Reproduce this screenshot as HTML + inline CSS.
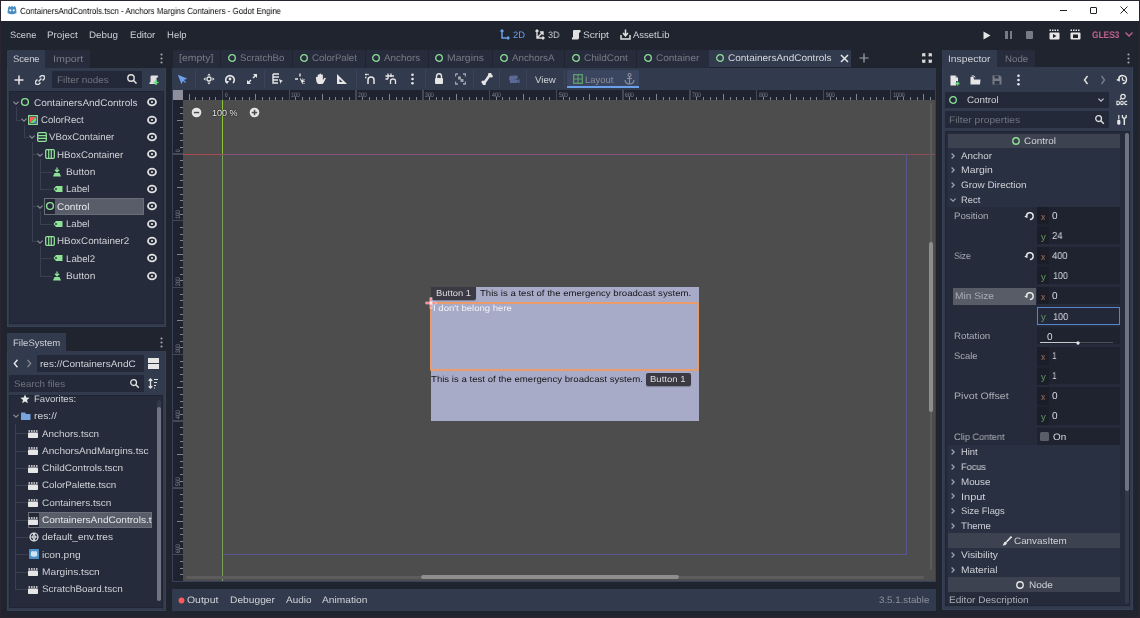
<!DOCTYPE html><html><head><meta charset="utf-8"><style>
html,body{margin:0;padding:0;width:1140px;height:618px;overflow:hidden;background:#20242f;}
.a{position:absolute;}
.t{position:absolute;white-space:nowrap;line-height:12px;font-family:"Liberation Sans", sans-serif;text-rendering:geometricPrecision;will-change:transform;}
</style></head><body>
<div class="a" style="left:0px;top:0px;width:1140px;height:618px;background:#2a2530;"></div>
<div class="a" style="left:1px;top:1px;width:1138px;height:616px;background:#20242f;"></div>
<div class="a" style="left:1px;top:1px;width:1138px;height:20px;background:#ffffff;"></div>
<svg class="a" style="left:6px;top:4px;" width="12" height="12" viewBox="0 0 12 12"><path d="M2 4 L3 2 L5 3 L6 1.5 L7 3 L9 2 L10 4 L10.5 9 Q6 11.5 1.5 9 Z" fill="#478cbf"/><circle cx="4.3" cy="6.3" r="1.1" fill="#fff"/><circle cx="7.7" cy="6.3" r="1.1" fill="#fff"/></svg>
<div class="t" style="left:20.30px;top:1px;color:#000;font-size:8.9px;line-height:20px;transform:scaleX(0.8940);transform-origin:0 0;">ContainersAndControls.tscn - Anchors Margins Containers - Godot Engine</div>
<div class="a" style="left:1060px;top:10px;width:7px;height:1px;background:#222;"></div>
<div class="a" style="left:1090px;top:6.5px;width:5px;height:5px;border:1px solid #222;border-radius:1px"></div>
<svg class="a" style="left:1120px;top:6px;" width="8" height="8" viewBox="0 0 8 8"><path d="M0.5 0.5 L7.5 7.5 M7.5 0.5 L0.5 7.5" stroke="#222" stroke-width="1"/></svg>
<div class="t" style="left:10.00px;top:25px;color:#cfd1d6;font-size:9.3px;line-height:20px;transform:scaleX(0.9975);transform-origin:0 0;">Scene</div>
<div class="t" style="left:47.40px;top:25px;color:#cfd1d6;font-size:9.3px;line-height:20px;transform:scaleX(1.0580);transform-origin:0 0;">Project</div>
<div class="t" style="left:89.20px;top:25px;color:#cfd1d6;font-size:9.3px;line-height:20px;transform:scaleX(1.0552);transform-origin:0 0;">Debug</div>
<div class="t" style="left:130.00px;top:25px;color:#cfd1d6;font-size:9.3px;line-height:20px;transform:scaleX(1.0423);transform-origin:0 0;">Editor</div>
<div class="t" style="left:167.40px;top:25px;color:#cfd1d6;font-size:9.3px;line-height:20px;transform:scaleX(1.0256);transform-origin:0 0;">Help</div>
<svg class="a" style="left:500px;top:29px;" width="10" height="11" viewBox="0 0 10 11"><path d="M2 1 L2 9 L9 9 M0.5 2.5 L2 1 L3.5 2.5 M7.5 7.5 L9 9 L7.5 10.5" stroke="#6a9fe9" stroke-width="1.5" fill="none"/></svg>
<div class="t" style="left:512.50px;top:25px;color:#6a9fe9;font-size:9.4px;line-height:20px;transform:scaleX(0.9724);transform-origin:0 0;">2D</div>
<svg class="a" style="left:535px;top:29px;" width="10" height="11" viewBox="0 0 10 11"><path d="M2 1 L2 9 L9 9 M2 9 L8 3 M0.5 2.5 L2 1 L3.5 2.5 M7.5 7.5 L9 9 L7.5 10.5 M5 3 L8 3 L8 6" stroke="#e0e0e0" stroke-width="1.4" fill="none"/></svg>
<div class="t" style="left:547.50px;top:25px;color:#cfd1d6;font-size:9.4px;line-height:20px;transform:scaleX(0.9558);transform-origin:0 0;">3D</div>
<svg class="a" style="left:571px;top:29px;" width="10" height="11" viewBox="0 0 10 11"><path d="M3 1 H9 Q10 1 9.5 3 L8 4 V9 Q8 10.5 6 10.5 H1 Q0.5 8 2 8 V2 Q2 1 3 1Z" fill="#e0e0e0"/></svg>
<div class="t" style="left:583.00px;top:25px;color:#cfd1d6;font-size:9.4px;line-height:20px;transform:scaleX(1.0826);transform-origin:0 0;">Script</div>
<svg class="a" style="left:620px;top:29px;" width="11" height="11" viewBox="0 0 11 11"><path d="M5.5 0.5 V6.5 M3 4 L5.5 6.8 L8 4 M1 6 V10 H10 V6" stroke="#e0e0e0" stroke-width="1.5" fill="none"/></svg>
<div class="t" style="left:632.50px;top:25px;color:#cfd1d6;font-size:9.4px;line-height:20px;transform:scaleX(1.0125);transform-origin:0 0;">AssetLib</div>
<svg class="a" style="left:983px;top:31px;" width="8" height="9" viewBox="0 0 8 9"><path d="M0.5 0.5 L7.5 4.5 L0.5 8.5Z" fill="#e6e6e6"/></svg>
<div class="a" style="left:1005px;top:31px;width:2.6px;height:8px;background:#767b86;"></div>
<div class="a" style="left:1009.5px;top:31px;width:2.6px;height:8px;background:#767b86;"></div>
<div class="a" style="left:1026px;top:31px;width:7px;height:8px;background:#767b86;border-radius:1px"></div>
<svg class="a" style="left:1049px;top:29px;" width="11" height="11" viewBox="0 0 11 11"><rect x="0.5" y="3.5" width="10" height="7" rx="1" fill="#e6e6e6"/><path d="M0.5 1.2 L10.5 1.2" stroke="#e6e6e6" stroke-width="1.4" stroke-dasharray="1.5 1"/><path d="M4 5 L7.5 7 L4 9Z" fill="#1d212b"/></svg>
<svg class="a" style="left:1070px;top:29px;" width="11" height="11" viewBox="0 0 11 11"><rect x="0.5" y="3.5" width="10" height="7" rx="1" fill="#e6e6e6"/><path d="M0.5 1.2 L10.5 1.2" stroke="#e6e6e6" stroke-width="1.4" stroke-dasharray="1.5 1"/><rect x="3" y="5.5" width="5" height="3.5" fill="#1d212b"/></svg>
<div class="t" style="left:1091.50px;top:26px;color:#c3638e;font-size:9.6px;line-height:20px;transform:scaleX(0.8733);transform-origin:0 0;font-weight:bold;">GLES3</div>
<svg class="a" style="left:1125px;top:32px;" width="8" height="5" viewBox="0 0 8 5"><path d="M0.5 0.5 L4 4 L7.5 0.5" stroke="#c3638e" stroke-width="1.3" fill="none"/></svg>
<div class="a" style="left:7px;top:49.5px;width:38px;height:18.5px;background:#323a4d;"></div>
<div class="t" style="left:12.60px;top:49px;color:#cfd1d6;font-size:9.4px;line-height:20px;transform:scaleX(0.9869);transform-origin:0 0;">Scene</div>
<div class="a" style="left:45px;top:49.5px;width:45px;height:18.5px;background:#262c3b;"></div>
<div class="t" style="left:52.60px;top:49px;color:#777b85;font-size:9.4px;line-height:20px;transform:scaleX(1.1408);transform-origin:0 0;">Import</div>
<svg class="a" style="left:159.5px;top:53px;" width="3" height="11" viewBox="0 0 3 11"><circle cx="1.5" cy="1.5" r="1.1" fill="#a0a4ad"/><circle cx="1.5" cy="5.5" r="1.1" fill="#a0a4ad"/><circle cx="1.5" cy="9.5" r="1.1" fill="#a0a4ad"/></svg>
<div class="a" style="left:7px;top:68px;width:159px;height:259px;background:#323a4d;box-sizing:border-box;border:1px solid #374259;border-top:none"></div>
<svg class="a" style="left:14px;top:75px;" width="10" height="10" viewBox="0 0 10 10"><path d="M5 0.5 V9.5 M0.5 5 H9.5" stroke="#e6e6e6" stroke-width="1.5"/></svg>
<svg class="a" style="left:35px;top:75px;" width="10" height="10" viewBox="0 0 10 10"><path d="M4.5 2.5 L6 1 Q7.5 -0.3 9 1 Q10.3 2.5 9 4 L7.5 5.5 M5.5 7.5 L4 9 Q2.5 10.3 1 9 Q-0.3 7.5 1 6 L2.5 4.5 M3.5 6.5 L6.5 3.5" stroke="#dadde2" stroke-width="1.5" fill="none"/></svg>
<div class="a" style="left:52px;top:71px;width:90px;height:17px;background:#232939;"></div>
<div class="t" style="left:56.50px;top:70px;color:#6f737d;font-size:9.4px;line-height:20px;transform:scaleX(1.0567);transform-origin:0 0;">Filter nodes</div>
<svg class="a" style="left:126px;top:73px;" width="12" height="12" viewBox="0 0 12 12"><circle cx="5" cy="5" r="3.2" stroke="#e0e0e0" stroke-width="1.4" fill="none"/><path d="M7.3 7.3 L10.5 10.5" stroke="#e0e0e0" stroke-width="1.6"/></svg>
<svg class="a" style="left:149px;top:75px;" width="10" height="10" viewBox="0 0 10 10"><path d="M3 0.5 H8.5 Q9.5 0.5 9 2 L7.5 3 V7.5 Q7.5 9 6 9 H0.5 Q0 7 1.5 7 V1.5 Q1.5 0.5 3 0.5Z" fill="#e0e0e0"/><path d="M7 5 V10 M4.5 7.5 H9.5" stroke="#5fe07a" stroke-width="1.6"/></svg>
<div class="a" style="left:9px;top:91px;width:154.5px;height:232.5px;background:#252b3b;box-sizing:border-box;border:1px solid #212533"></div>
<div class="a" style="left:15.5px;top:107.2px;width:1px;height:12.350000000000009px;background:#3a4050;"></div>
<div class="a" style="left:15.5px;top:119.55000000000001px;width:5.5px;height:1px;background:#3a4050;"></div>
<div class="a" style="left:23.5px;top:124.55000000000001px;width:1px;height:12.349999999999994px;background:#3a4050;"></div>
<div class="a" style="left:23.5px;top:136.9px;width:5.5px;height:1px;background:#3a4050;"></div>
<div class="a" style="left:31.5px;top:141.9px;width:1px;height:99.1px;background:#3a4050;"></div>
<div class="a" style="left:31.5px;top:154.25px;width:5.5px;height:1px;background:#3a4050;"></div>
<div class="a" style="left:31.5px;top:206.3px;width:5.5px;height:1px;background:#3a4050;"></div>
<div class="a" style="left:31.5px;top:241.0px;width:5.5px;height:1px;background:#3a4050;"></div>
<div class="a" style="left:39.5px;top:159.25px;width:1px;height:29.69999999999999px;background:#3a4050;"></div>
<div class="a" style="left:39.5px;top:171.60000000000002px;width:12.5px;height:1px;background:#3a4050;"></div>
<div class="a" style="left:39.5px;top:188.95px;width:12.5px;height:1px;background:#3a4050;"></div>
<div class="a" style="left:39.5px;top:211.3px;width:1px;height:12.350000000000023px;background:#3a4050;"></div>
<div class="a" style="left:39.5px;top:223.65000000000003px;width:12.5px;height:1px;background:#3a4050;"></div>
<div class="a" style="left:39.5px;top:246.0px;width:1px;height:29.69999999999999px;background:#3a4050;"></div>
<div class="a" style="left:39.5px;top:258.35px;width:12.5px;height:1px;background:#3a4050;"></div>
<div class="a" style="left:39.5px;top:275.7px;width:12.5px;height:1px;background:#3a4050;"></div>
<div class="a" style="left:44px;top:198px;width:100px;height:16.8px;background:#595d69;box-sizing:border-box;border:1px solid #6a6e79"></div>
<div class="a" style="left:45px;top:199px;width:10px;height:14.8px;background:#242836;"></div>
<svg class="a" style="left:12px;top:99.7px;" width="8" height="6" viewBox="0 0 8 6"><path d="M1.4 1.6 L4 4.2 L6.6 1.6" stroke="#8a8e98" stroke-width="1.15" fill="none"/></svg>
<svg class="a" style="left:20.3px;top:97.2px;" width="10" height="10" viewBox="0 0 10 10"><circle cx="5" cy="5" r="3.4" stroke="#8fe196" stroke-width="1.4" fill="none"/></svg>
<div class="t" style="left:33.70px;top:94px;color:#cfd1d6;font-size:9.6px;line-height:20px;transform:scaleX(1.0427);transform-origin:0 0;">ContainersAndControls</div>
<svg class="a" style="left:146.2px;top:97.2px;" width="12" height="10" viewBox="0 0 12 10"><ellipse cx="6" cy="5" rx="4.0" ry="3.3" stroke="#e2e2e2" stroke-width="1.8" fill="none"/><circle cx="6" cy="5" r="1.1" fill="#e2e2e2"/></svg>
<svg class="a" style="left:20.2px;top:117.05000000000001px;" width="8" height="6" viewBox="0 0 8 6"><path d="M1.4 1.6 L4 4.2 L6.6 1.6" stroke="#8a8e98" stroke-width="1.15" fill="none"/></svg>
<svg class="a" style="left:28.4px;top:114.55000000000001px;" width="10" height="10" viewBox="0 0 10 10"><rect x="0.7" y="0.7" width="8.6" height="8.6" stroke="#8fe196" stroke-width="1.3" fill="none"/><path d="M2 2 H8 L2 8Z" fill="#ff5d5d"/><path d="M8 2 V8 H2Z" fill="#57e86a"/><path d="M8 5 V8 H5Z" fill="#4f8fff"/></svg>
<div class="t" style="left:41.40px;top:111px;color:#cfd1d6;font-size:9.6px;line-height:20px;transform:scaleX(1.0030);transform-origin:0 0;">ColorRect</div>
<svg class="a" style="left:146.2px;top:114.55000000000001px;" width="12" height="10" viewBox="0 0 12 10"><ellipse cx="6" cy="5" rx="4.0" ry="3.3" stroke="#e2e2e2" stroke-width="1.8" fill="none"/><circle cx="6" cy="5" r="1.1" fill="#e2e2e2"/></svg>
<svg class="a" style="left:28.1px;top:134.4px;" width="8" height="6" viewBox="0 0 8 6"><path d="M1.4 1.6 L4 4.2 L6.6 1.6" stroke="#8a8e98" stroke-width="1.15" fill="none"/></svg>
<svg class="a" style="left:36.5px;top:131.9px;" width="10" height="10" viewBox="0 0 10 10"><rect x="0.7" y="0.7" width="8.6" height="8.6" rx="1" stroke="#8fe196" stroke-width="1.3" fill="none"/><path d="M1 3.7 H9 M1 6.3 H9" stroke="#8fe196" stroke-width="1.2"/></svg>
<div class="t" style="left:49.40px;top:128px;color:#cfd1d6;font-size:9.6px;line-height:20px;transform:scaleX(1.0115);transform-origin:0 0;">VBoxContainer</div>
<svg class="a" style="left:146.2px;top:131.9px;" width="12" height="10" viewBox="0 0 12 10"><ellipse cx="6" cy="5" rx="4.0" ry="3.3" stroke="#e2e2e2" stroke-width="1.8" fill="none"/><circle cx="6" cy="5" r="1.1" fill="#e2e2e2"/></svg>
<svg class="a" style="left:36px;top:151.75px;" width="8" height="6" viewBox="0 0 8 6"><path d="M1.4 1.6 L4 4.2 L6.6 1.6" stroke="#8a8e98" stroke-width="1.15" fill="none"/></svg>
<svg class="a" style="left:44.5px;top:149.25px;" width="10" height="10" viewBox="0 0 10 10"><rect x="0.7" y="0.7" width="8.6" height="8.6" rx="1" stroke="#8fe196" stroke-width="1.3" fill="none"/><path d="M3.7 1 V9 M6.3 1 V9" stroke="#8fe196" stroke-width="1.2"/></svg>
<div class="t" style="left:57.40px;top:146px;color:#cfd1d6;font-size:9.6px;line-height:20px;transform:scaleX(1.0186);transform-origin:0 0;">HBoxContainer</div>
<svg class="a" style="left:146.2px;top:149.25px;" width="12" height="10" viewBox="0 0 12 10"><ellipse cx="6" cy="5" rx="4.0" ry="3.3" stroke="#e2e2e2" stroke-width="1.8" fill="none"/><circle cx="6" cy="5" r="1.1" fill="#e2e2e2"/></svg>
<svg class="a" style="left:52.4px;top:166.60000000000002px;" width="10" height="10" viewBox="0 0 10 10"><path d="M5 0.5 V4.5 M3 2.8 L5 4.8 L7 2.8" stroke="#8fe196" stroke-width="1.3" fill="none"/><path d="M2.5 6 H7.5 L9 9.5 H1Z" fill="#8fe196"/></svg>
<div class="t" style="left:65.50px;top:163px;color:#cfd1d6;font-size:9.6px;line-height:20px;transform:scaleX(1.0597);transform-origin:0 0;">Button</div>
<svg class="a" style="left:146.2px;top:166.60000000000002px;" width="12" height="10" viewBox="0 0 12 10"><ellipse cx="6" cy="5" rx="4.0" ry="3.3" stroke="#e2e2e2" stroke-width="1.8" fill="none"/><circle cx="6" cy="5" r="1.1" fill="#e2e2e2"/></svg>
<svg class="a" style="left:52.6px;top:183.95px;" width="10" height="10" viewBox="0 0 10 10"><path d="M0.5 5 L3 2 H9.5 V8 H3Z" fill="#8fe196"/><circle cx="3" cy="5" r="0.9" fill="#242836"/></svg>
<div class="t" style="left:65.50px;top:180px;color:#cfd1d6;font-size:9.6px;line-height:20px;transform:scaleX(0.9927);transform-origin:0 0;">Label</div>
<svg class="a" style="left:146.2px;top:183.95px;" width="12" height="10" viewBox="0 0 12 10"><ellipse cx="6" cy="5" rx="4.0" ry="3.3" stroke="#e2e2e2" stroke-width="1.8" fill="none"/><circle cx="6" cy="5" r="1.1" fill="#e2e2e2"/></svg>
<svg class="a" style="left:36px;top:203.8px;" width="8" height="6" viewBox="0 0 8 6"><path d="M1.4 1.6 L4 4.2 L6.6 1.6" stroke="#8a8e98" stroke-width="1.15" fill="none"/></svg>
<svg class="a" style="left:44.5px;top:201.3px;" width="10" height="10" viewBox="0 0 10 10"><circle cx="5" cy="5" r="3.4" stroke="#8fe196" stroke-width="1.4" fill="none"/></svg>
<div class="t" style="left:57.30px;top:198px;color:#e6e7ea;font-size:9.6px;line-height:20px;transform:scaleX(1.0465);transform-origin:0 0;">Control</div>
<svg class="a" style="left:146.2px;top:201.3px;" width="12" height="10" viewBox="0 0 12 10"><ellipse cx="6" cy="5" rx="4.0" ry="3.3" stroke="#e2e2e2" stroke-width="1.8" fill="none"/><circle cx="6" cy="5" r="1.1" fill="#e2e2e2"/></svg>
<svg class="a" style="left:52.6px;top:218.65000000000003px;" width="10" height="10" viewBox="0 0 10 10"><path d="M0.5 5 L3 2 H9.5 V8 H3Z" fill="#8fe196"/><circle cx="3" cy="5" r="0.9" fill="#242836"/></svg>
<div class="t" style="left:65.50px;top:215px;color:#cfd1d6;font-size:9.6px;line-height:20px;transform:scaleX(0.9927);transform-origin:0 0;">Label</div>
<svg class="a" style="left:146.2px;top:218.65000000000003px;" width="12" height="10" viewBox="0 0 12 10"><ellipse cx="6" cy="5" rx="4.0" ry="3.3" stroke="#e2e2e2" stroke-width="1.8" fill="none"/><circle cx="6" cy="5" r="1.1" fill="#e2e2e2"/></svg>
<svg class="a" style="left:36px;top:238.5px;" width="8" height="6" viewBox="0 0 8 6"><path d="M1.4 1.6 L4 4.2 L6.6 1.6" stroke="#8a8e98" stroke-width="1.15" fill="none"/></svg>
<svg class="a" style="left:44.5px;top:236.0px;" width="10" height="10" viewBox="0 0 10 10"><rect x="0.7" y="0.7" width="8.6" height="8.6" rx="1" stroke="#8fe196" stroke-width="1.3" fill="none"/><path d="M3.7 1 V9 M6.3 1 V9" stroke="#8fe196" stroke-width="1.2"/></svg>
<div class="t" style="left:57.30px;top:232px;color:#cfd1d6;font-size:9.6px;line-height:20px;transform:scaleX(1.0246);transform-origin:0 0;">HBoxContainer2</div>
<svg class="a" style="left:146.2px;top:236.0px;" width="12" height="10" viewBox="0 0 12 10"><ellipse cx="6" cy="5" rx="4.0" ry="3.3" stroke="#e2e2e2" stroke-width="1.8" fill="none"/><circle cx="6" cy="5" r="1.1" fill="#e2e2e2"/></svg>
<svg class="a" style="left:52.6px;top:253.35000000000002px;" width="10" height="10" viewBox="0 0 10 10"><path d="M0.5 5 L3 2 H9.5 V8 H3Z" fill="#8fe196"/><circle cx="3" cy="5" r="0.9" fill="#242836"/></svg>
<div class="t" style="left:65.50px;top:250px;color:#cfd1d6;font-size:9.6px;line-height:20px;transform:scaleX(1.0087);transform-origin:0 0;">Label2</div>
<svg class="a" style="left:146.2px;top:253.35000000000002px;" width="12" height="10" viewBox="0 0 12 10"><ellipse cx="6" cy="5" rx="4.0" ry="3.3" stroke="#e2e2e2" stroke-width="1.8" fill="none"/><circle cx="6" cy="5" r="1.1" fill="#e2e2e2"/></svg>
<svg class="a" style="left:52.4px;top:270.7px;" width="10" height="10" viewBox="0 0 10 10"><path d="M5 0.5 V4.5 M3 2.8 L5 4.8 L7 2.8" stroke="#8fe196" stroke-width="1.3" fill="none"/><path d="M2.5 6 H7.5 L9 9.5 H1Z" fill="#8fe196"/></svg>
<div class="t" style="left:65.50px;top:267px;color:#cfd1d6;font-size:9.6px;line-height:20px;transform:scaleX(1.0597);transform-origin:0 0;">Button</div>
<svg class="a" style="left:146.2px;top:270.7px;" width="12" height="10" viewBox="0 0 12 10"><ellipse cx="6" cy="5" rx="4.0" ry="3.3" stroke="#e2e2e2" stroke-width="1.8" fill="none"/><circle cx="6" cy="5" r="1.1" fill="#e2e2e2"/></svg>
<div class="a" style="left:7px;top:333.2px;width:58.8px;height:18.2px;background:#323a4d;"></div>
<div class="t" style="left:12.60px;top:333px;color:#cfd1d6;font-size:9.4px;line-height:20px;transform:scaleX(1.0197);transform-origin:0 0;">FileSystem</div>
<svg class="a" style="left:159.5px;top:337px;" width="3" height="11" viewBox="0 0 3 11"><circle cx="1.5" cy="1.5" r="1.1" fill="#a0a4ad"/><circle cx="1.5" cy="5.5" r="1.1" fill="#a0a4ad"/><circle cx="1.5" cy="9.5" r="1.1" fill="#a0a4ad"/></svg>
<div class="a" style="left:7px;top:351.4px;width:159px;height:260px;background:#323a4d;box-sizing:border-box;border:1px solid #374259;border-top:none"></div>
<svg class="a" style="left:13px;top:359px;" width="6" height="9" viewBox="0 0 6 9"><path d="M4.5 0.8 L1.3 4.5 L4.5 8.2" stroke="#e6e6e6" stroke-width="1.4" fill="none"/></svg>
<svg class="a" style="left:26px;top:359px;" width="6" height="9" viewBox="0 0 6 9"><path d="M1.5 0.8 L4.7 4.5 L1.5 8.2" stroke="#8a8e98" stroke-width="1.2" fill="none"/></svg>
<div class="a" style="left:36.5px;top:355.3px;width:107.4px;height:16.5px;background:#232939;"></div>
<div class="t" style="left:40.00px;top:354px;color:#cfd1d6;font-size:9.4px;line-height:20px;transform:scaleX(1.0683);transform-origin:0 0;">res://ContainersAndC</div>
<div class="a" style="left:148px;top:358.2px;width:11.3px;height:4.5px;background:#e6e6e6;"></div>
<div class="a" style="left:148px;top:364.4px;width:11.3px;height:4.5px;background:#e6e6e6;"></div>
<div class="a" style="left:9.3px;top:375px;width:134.6px;height:16.7px;background:#232939;"></div>
<div class="t" style="left:13.80px;top:374px;color:#6f737d;font-size:9.4px;line-height:20px;transform:scaleX(1.0425);transform-origin:0 0;">Search files</div>
<svg class="a" style="left:129px;top:378px;" width="11" height="11" viewBox="0 0 11 11"><circle cx="4.6" cy="4.6" r="2.9" stroke="#e0e0e0" stroke-width="1.3" fill="none"/><path d="M6.8 6.8 L9.8 9.8" stroke="#e0e0e0" stroke-width="1.5"/></svg>
<svg class="a" style="left:148px;top:378px;" width="11" height="11" viewBox="0 0 11 11"><path d="M2.5 1 V10 M0.7 2.8 L2.5 1 L4.3 2.8 M0.7 8.2 L2.5 10 L4.3 8.2" stroke="#e0e0e0" stroke-width="1.3" fill="none"/><path d="M6 1.5 H10 M6 4.5 H9 M6 7.5 H8 M6 10 H7" stroke="#e0e0e0" stroke-width="1.1"/></svg>
<div class="a" style="left:9.3px;top:394.8px;width:153.5px;height:213.5px;background:#252b3b;box-sizing:border-box;border:1px solid #212533"></div>
<div class="a" style="left:157px;top:400.2px;width:4px;height:200.6px;background:#333946;border-radius:2px"></div>
<div class="a" style="left:157px;top:407px;width:4px;height:193.8px;background:#6f7480;border-radius:2px"></div>
<svg class="a" style="left:20px;top:394px;" width="10" height="10" viewBox="0 0 10 10"><path d="M5 0.5 L6.3 3.6 L9.6 3.8 L7 6 L7.9 9.3 L5 7.5 L2.1 9.3 L3 6 L0.4 3.8 L3.7 3.6Z" fill="#e6e6e6"/></svg>
<div class="t" style="left:33.70px;top:389px;color:#cfd1d6;font-size:9.4px;line-height:20px;transform:scaleX(1.0226);transform-origin:0 0;">Favorites:</div>
<svg class="a" style="left:12px;top:413.4px;" width="8" height="6" viewBox="0 0 8 6"><path d="M1.4 1.6 L4 4.2 L6.6 1.6" stroke="#8a8e98" stroke-width="1.15" fill="none"/></svg>
<svg class="a" style="left:20.5px;top:411.5px;" width="10" height="8.5" viewBox="0 0 10 8.5"><path d="M0 0.5 H4 L5 2 H9.5 V8.5 H0Z" fill="#7aa4e0"/></svg>
<div class="t" style="left:33.70px;top:406px;color:#cfd1d6;font-size:9.4px;line-height:20px;transform:scaleX(1.0997);transform-origin:0 0;">res://</div>
<div class="a" style="left:15px;top:424px;width:1px;height:165.4px;background:#3a4050;"></div>
<div class="a" style="left:15px;top:433.2px;width:13px;height:1px;background:#3a4050;"></div>
<svg class="a" style="left:28.3px;top:428.9px;" width="10" height="9" viewBox="0 0 10 9"><path d="M0.5 2 H9.5" stroke="#e6e6e6" stroke-width="1.3" stroke-dasharray="1.6 0.9"/><rect x="0" y="3.5" width="10" height="5.5" rx="0.8" fill="#e6e6e6"/></svg>
<div class="t" style="left:41.80px;top:424px;color:#cfd1d6;font-size:9.4px;line-height:20px;transform:scaleX(1.0528);transform-origin:0 0;">Anchors.tscn</div>
<div class="a" style="left:15px;top:450.52px;width:13px;height:1px;background:#3a4050;"></div>
<svg class="a" style="left:28.3px;top:446.21999999999997px;" width="10" height="9" viewBox="0 0 10 9"><path d="M0.5 2 H9.5" stroke="#e6e6e6" stroke-width="1.3" stroke-dasharray="1.6 0.9"/><rect x="0" y="3.5" width="10" height="5.5" rx="0.8" fill="#e6e6e6"/></svg>
<div class="t" style="left:41.80px;top:441px;color:#cfd1d6;font-size:9.4px;line-height:20px;transform:scaleX(1.0759);transform-origin:0 0;">AnchorsAndMargins.tsc</div>
<div class="a" style="left:15px;top:467.84px;width:13px;height:1px;background:#3a4050;"></div>
<svg class="a" style="left:28.3px;top:463.53999999999996px;" width="10" height="9" viewBox="0 0 10 9"><path d="M0.5 2 H9.5" stroke="#e6e6e6" stroke-width="1.3" stroke-dasharray="1.6 0.9"/><rect x="0" y="3.5" width="10" height="5.5" rx="0.8" fill="#e6e6e6"/></svg>
<div class="t" style="left:41.80px;top:458px;color:#cfd1d6;font-size:9.4px;line-height:20px;transform:scaleX(1.0671);transform-origin:0 0;">ChildControls.tscn</div>
<div class="a" style="left:15px;top:485.15999999999997px;width:13px;height:1px;background:#3a4050;"></div>
<svg class="a" style="left:28.3px;top:480.85999999999996px;" width="10" height="9" viewBox="0 0 10 9"><path d="M0.5 2 H9.5" stroke="#e6e6e6" stroke-width="1.3" stroke-dasharray="1.6 0.9"/><rect x="0" y="3.5" width="10" height="5.5" rx="0.8" fill="#e6e6e6"/></svg>
<div class="t" style="left:41.80px;top:475px;color:#cfd1d6;font-size:9.4px;line-height:20px;transform:scaleX(1.0408);transform-origin:0 0;">ColorPalette.tscn</div>
<div class="a" style="left:15px;top:502.48px;width:13px;height:1px;background:#3a4050;"></div>
<svg class="a" style="left:28.3px;top:498.18px;" width="10" height="9" viewBox="0 0 10 9"><path d="M0.5 2 H9.5" stroke="#e6e6e6" stroke-width="1.3" stroke-dasharray="1.6 0.9"/><rect x="0" y="3.5" width="10" height="5.5" rx="0.8" fill="#e6e6e6"/></svg>
<div class="t" style="left:41.80px;top:493px;color:#cfd1d6;font-size:9.4px;line-height:20px;transform:scaleX(1.0623);transform-origin:0 0;">Containers.tscn</div>
<div class="a" style="left:15px;top:519.8px;width:13px;height:1px;background:#3a4050;"></div>
<div class="a" style="left:28.1px;top:511.6px;width:124.2px;height:16.9px;background:#595d69;box-sizing:border-box;border:1px solid #6a6e79"></div>
<div class="a" style="left:29.1px;top:512.6px;width:9.8px;height:14.9px;background:#242836;"></div>
<svg class="a" style="left:28.3px;top:515.5px;" width="10" height="9" viewBox="0 0 10 9"><path d="M0.5 2 H9.5" stroke="#e6e6e6" stroke-width="1.3" stroke-dasharray="1.6 0.9"/><rect x="0" y="3.5" width="10" height="5.5" rx="0.8" fill="#e6e6e6"/></svg>
<div class="t" style="left:41.80px;top:510px;color:#e6e7ea;font-size:9.4px;line-height:20px;transform:scaleX(1.0721);transform-origin:0 0;">ContainersAndControls.t</div>
<div class="a" style="left:15px;top:537.12px;width:13px;height:1px;background:#3a4050;"></div>
<svg class="a" style="left:28.5px;top:532.12px;" width="10" height="10" viewBox="0 0 10 10"><circle cx="5" cy="5" r="4" stroke="#e6e6e6" stroke-width="1.2" fill="none"/><path d="M1 5 H9 M5 1 V9 M5 1 Q2 5 5 9 M5 1 Q8 5 5 9" stroke="#e6e6e6" stroke-width="0.9" fill="none"/></svg>
<div class="t" style="left:41.80px;top:527px;color:#cfd1d6;font-size:9.4px;line-height:20px;transform:scaleX(1.0759);transform-origin:0 0;">default_env.tres</div>
<div class="a" style="left:15px;top:554.44px;width:13px;height:1px;background:#3a4050;"></div>
<svg class="a" style="left:28.5px;top:549.44px;" width="10" height="10" viewBox="0 0 10 10"><rect x="0" y="0" width="10" height="10" rx="1" fill="#4f8fc8"/><path d="M2 3 L3 2 L5 2.6 L7 2 L8 3 L8.3 6.8 Q5 8.5 1.7 6.8Z" fill="#cfe3f5"/></svg>
<div class="t" style="left:41.80px;top:545px;color:#cfd1d6;font-size:9.4px;line-height:20px;transform:scaleX(1.0892);transform-origin:0 0;">icon.png</div>
<div class="a" style="left:15px;top:571.76px;width:13px;height:1px;background:#3a4050;"></div>
<svg class="a" style="left:28.3px;top:567.46px;" width="10" height="9" viewBox="0 0 10 9"><path d="M0.5 2 H9.5" stroke="#e6e6e6" stroke-width="1.3" stroke-dasharray="1.6 0.9"/><rect x="0" y="3.5" width="10" height="5.5" rx="0.8" fill="#e6e6e6"/></svg>
<div class="t" style="left:41.80px;top:562px;color:#cfd1d6;font-size:9.4px;line-height:20px;transform:scaleX(1.0863);transform-origin:0 0;">Margins.tscn</div>
<div class="a" style="left:15px;top:589.0799999999999px;width:13px;height:1px;background:#3a4050;"></div>
<svg class="a" style="left:28.3px;top:584.78px;" width="10" height="9" viewBox="0 0 10 9"><path d="M0.5 2 H9.5" stroke="#e6e6e6" stroke-width="1.3" stroke-dasharray="1.6 0.9"/><rect x="0" y="3.5" width="10" height="5.5" rx="0.8" fill="#e6e6e6"/></svg>
<div class="t" style="left:41.80px;top:579px;color:#cfd1d6;font-size:9.4px;line-height:20px;transform:scaleX(1.0534);transform-origin:0 0;">ScratchBoard.tscn</div>
<div class="a" style="left:173px;top:49.5px;width:46.5px;height:18px;background:#262c3b;"></div>
<div class="t" style="left:178.60px;top:49px;color:#777b85;font-size:9.6px;line-height:20px;transform:scaleX(1.0925);transform-origin:0 0;">[empty]</div>
<div class="a" style="left:220.5px;top:49.5px;width:71.0px;height:18px;background:#262c3b;"></div>
<svg class="a" style="left:226.8px;top:53px;" width="10" height="10" viewBox="0 0 10 10"><circle cx="5" cy="5" r="3.3" stroke="#8fe196" stroke-width="1.3" fill="none"/></svg>
<div class="t" style="left:240.00px;top:49px;color:#777b85;font-size:9.6px;line-height:20px;transform:scaleX(1.0022);transform-origin:0 0;">ScratchBo</div>
<div class="a" style="left:292.5px;top:49.5px;width:72.0px;height:18px;background:#262c3b;"></div>
<svg class="a" style="left:298.6px;top:53px;" width="10" height="10" viewBox="0 0 10 10"><circle cx="5" cy="5" r="3.3" stroke="#8fe196" stroke-width="1.3" fill="none"/></svg>
<div class="t" style="left:311.80px;top:49px;color:#777b85;font-size:9.6px;line-height:20px;transform:scaleX(1.0015);transform-origin:0 0;">ColorPalet</div>
<div class="a" style="left:365.5px;top:49.5px;width:62.5px;height:18px;background:#262c3b;"></div>
<svg class="a" style="left:370.7px;top:53px;" width="10" height="10" viewBox="0 0 10 10"><circle cx="5" cy="5" r="3.3" stroke="#8fe196" stroke-width="1.3" fill="none"/></svg>
<div class="t" style="left:384.00px;top:49px;color:#777b85;font-size:9.6px;line-height:20px;transform:scaleX(1.0275);transform-origin:0 0;">Anchors</div>
<div class="a" style="left:429px;top:49.5px;width:62.5px;height:18px;background:#262c3b;"></div>
<svg class="a" style="left:434.3px;top:53px;" width="10" height="10" viewBox="0 0 10 10"><circle cx="5" cy="5" r="3.3" stroke="#8fe196" stroke-width="1.3" fill="none"/></svg>
<div class="t" style="left:447.20px;top:49px;color:#777b85;font-size:9.6px;line-height:20px;transform:scaleX(1.0812);transform-origin:0 0;">Margins</div>
<div class="a" style="left:492.5px;top:49.5px;width:71.0px;height:18px;background:#262c3b;"></div>
<svg class="a" style="left:498.6px;top:53px;" width="10" height="10" viewBox="0 0 10 10"><circle cx="5" cy="5" r="3.3" stroke="#8fe196" stroke-width="1.3" fill="none"/></svg>
<div class="t" style="left:511.60px;top:49px;color:#777b85;font-size:9.6px;line-height:20px;transform:scaleX(1.0201);transform-origin:0 0;">AnchorsA</div>
<div class="a" style="left:564.5px;top:49.5px;width:71.0px;height:18px;background:#262c3b;"></div>
<svg class="a" style="left:570.6px;top:53px;" width="10" height="10" viewBox="0 0 10 10"><circle cx="5" cy="5" r="3.3" stroke="#8fe196" stroke-width="1.3" fill="none"/></svg>
<div class="t" style="left:583.70px;top:49px;color:#777b85;font-size:9.6px;line-height:20px;transform:scaleX(1.0417);transform-origin:0 0;">ChildCont</div>
<div class="a" style="left:636.5px;top:49.5px;width:72.5px;height:18px;background:#262c3b;"></div>
<svg class="a" style="left:642.8px;top:53px;" width="10" height="10" viewBox="0 0 10 10"><circle cx="5" cy="5" r="3.3" stroke="#8fe196" stroke-width="1.3" fill="none"/></svg>
<div class="t" style="left:656.30px;top:49px;color:#777b85;font-size:9.6px;line-height:20px;transform:scaleX(1.0405);transform-origin:0 0;">Container</div>
<div class="a" style="left:709.2px;top:49.8px;width:142.1px;height:17.7px;background:#323a4d;"></div>
<svg class="a" style="left:714.7px;top:53px;" width="10" height="10" viewBox="0 0 10 10"><circle cx="5" cy="5" r="3.3" stroke="#8fe196" stroke-width="1.3" fill="none"/></svg>
<div class="t" style="left:728.00px;top:49px;color:#d6d8dc;font-size:9.6px;line-height:20px;transform:scaleX(1.0437);transform-origin:0 0;">ContainersAndControls</div>
<svg class="a" style="left:840px;top:53.5px;" width="9" height="9" viewBox="0 0 9 9"><path d="M1 1 L8 8 M8 1 L1 8" stroke="#e6e6e6" stroke-width="1.5"/></svg>
<svg class="a" style="left:858.5px;top:53px;" width="10" height="10" viewBox="0 0 10 10"><path d="M5 0.5 V9.5 M0.5 5 H9.5" stroke="#a0a4ad" stroke-width="1.2"/></svg>
<svg class="a" style="left:922px;top:53px;" width="10" height="10" viewBox="0 0 10 10"><path d="M0.8 3.5 V0.8 H3.5 M0.8 0.8 L3.3 3.3 M6.5 0.8 H9.2 V3.5 M9.2 0.8 L6.7 3.3 M0.8 6.5 V9.2 H3.5 M0.8 9.2 L3.3 6.7 M9.2 6.5 V9.2 H6.5 M9.2 9.2 L6.7 6.7" stroke="#e6e6e6" stroke-width="1.3" fill="none"/></svg>
<div class="a" style="left:172px;top:67.5px;width:764px;height:22.5px;background:#323a4d;"></div>
<div class="a" style="left:195.2px;top:70px;width:1px;height:18px;background:#3b445a;"></div>
<div class="a" style="left:264.2px;top:70px;width:1px;height:18px;background:#3b445a;"></div>
<div class="a" style="left:355.5px;top:70px;width:1px;height:18px;background:#3b445a;"></div>
<div class="a" style="left:425.0px;top:70px;width:1px;height:18px;background:#3b445a;"></div>
<div class="a" style="left:473.3px;top:70px;width:1px;height:18px;background:#3b445a;"></div>
<div class="a" style="left:498.9px;top:70px;width:1px;height:18px;background:#3b445a;"></div>
<div class="a" style="left:526.3px;top:70px;width:1px;height:18px;background:#3b445a;"></div>
<div class="a" style="left:563.5px;top:70px;width:1px;height:18px;background:#3b445a;"></div>
<svg class="a" style="left:178px;top:74.5px;" width="9" height="9" viewBox="0 0 9 9"><path d="M0.8 0.8 L7.8 3.6 L4.8 4.8 L3.6 7.8Z M4.5 4.5 L7.5 7.5" fill="#6ea1ec" stroke="#6ea1ec" stroke-width="1.1"/></svg>
<svg class="a" style="left:203px;top:73px;" width="12" height="12" viewBox="0 0 12 12"><circle cx="6" cy="6" r="2" fill="none" stroke="#e6e6e6" stroke-width="1.3"/><path d="M6 0.5 L4.3 2.5 H7.7Z M6 11.5 L4.3 9.5 H7.7Z M0.5 6 L2.5 4.3 V7.7Z M11.5 6 L9.5 4.3 V7.7Z" fill="#e6e6e6"/></svg>
<svg class="a" style="left:224px;top:73px;" width="12" height="12" viewBox="0 0 12 12"><path d="M3 10 A4.3 4.3 0 1 1 9 10" stroke="#e6e6e6" stroke-width="1.6" fill="none"/><circle cx="6" cy="6" r="1.4" fill="#e6e6e6"/><path d="M1 8 L3.2 11 L5 8Z" fill="#e6e6e6"/></svg>
<svg class="a" style="left:246px;top:73px;" width="12" height="12" viewBox="0 0 12 12"><path d="M7 1 H11 V5 Z M1 7 V11 H5Z" fill="#e6e6e6"/><path d="M10 2 L7 5 M2 10 L5 7" stroke="#e6e6e6" stroke-width="1.5"/></svg>
<svg class="a" style="left:272px;top:73px;" width="12" height="12" viewBox="0 0 12 12"><path d="M1 1 H7 M1 1 V10 H6 M1 4 H7 M1 7 H6" stroke="#e6e6e6" stroke-width="1.4" fill="none"/><path d="M7 6 L11 8 L9 9 L8.5 11Z" fill="#e6e6e6"/></svg>
<svg class="a" style="left:294px;top:73px;" width="12" height="12" viewBox="0 0 12 12"><path d="M6 0.5 V3.5 M1 6 H4" stroke="#e6e6e6" stroke-width="1.4"/><path d="M6 6 L11 8 L9 9 L8.5 11.5Z" fill="#e6e6e6"/><path d="M6 6 H10 V11" stroke="#e6e6e6" stroke-width="1" stroke-dasharray="1 1" fill="none"/></svg>
<svg class="a" style="left:315px;top:73px;" width="12" height="12" viewBox="0 0 12 12"><path d="M3 11 Q1 9 1 6 V4 Q1.8 3.3 2.7 4 V6.5 V1.8 Q3.5 1 4.4 1.8 V5.5 V1 Q5.3 0.2 6.2 1 V5.5 V1.8 Q7 1 7.9 1.8 V7 L9.3 5 Q10.5 4.5 10.8 5.5 L8.5 10 Q8 11 7 11Z" fill="#e6e6e6"/></svg>
<svg class="a" style="left:336px;top:73px;" width="12" height="12" viewBox="0 0 12 12"><path d="M1 11 V1 L11 11Z" fill="#e6e6e6"/><path d="M3.5 9 V6 L6.5 9Z" fill="#2f3749"/></svg>
<svg class="a" style="left:364px;top:73px;" width="12" height="12" viewBox="0 0 12 12"><path d="M4 11 V7 Q4 4 7 4 Q10 4 10 7 V11" stroke="#e6e6e6" stroke-width="1.5" fill="none"/><path d="M1 1.5 H3 M1 4.5 H2.5" stroke="#e6e6e6" stroke-width="1.3"/><path d="M3.5 1 L4.5 2" stroke="#e6e6e6" stroke-width="1.3"/></svg>
<svg class="a" style="left:384.5px;top:73px;" width="12" height="12" viewBox="0 0 12 12"><path d="M3 0.5 V6 M6 0.5 V4 M0.5 3 H9 M0.5 6 H3 M5.5 11 V8 Q5.5 6 8 6 Q10.5 6 10.5 8 V11" stroke="#e6e6e6" stroke-width="1.3" fill="none"/></svg>
<svg class="a" style="left:410.5px;top:73px;" width="3" height="12" viewBox="0 0 3 12"><circle cx="1.5" cy="1.8" r="1.3" fill="#e6e6e6"/><circle cx="1.5" cy="6" r="1.3" fill="#e6e6e6"/><circle cx="1.5" cy="10.2" r="1.3" fill="#e6e6e6"/></svg>
<svg class="a" style="left:433.5px;top:73px;" width="10" height="12" viewBox="0 0 10 12"><path d="M2.5 5 V3.5 Q2.5 0.8 5 0.8 Q7.5 0.8 7.5 3.5 V5" stroke="#e6e6e6" stroke-width="1.4" fill="none"/><rect x="1" y="5" width="8" height="6" rx="1" fill="#e6e6e6"/></svg>
<svg class="a" style="left:454.5px;top:73px;" width="11" height="12" viewBox="0 0 11 12"><path d="M0.5 1 H3 M0.5 1 V3.5 M8 1 H10.5 V3.5 M0.5 8.5 V11 H3 M10.5 8.5 V11 H8" stroke="#a0a4ad" stroke-width="1.3" fill="none"/><rect x="3" y="3.5" width="3" height="3" fill="#a0a4ad"/><rect x="5.5" y="6" width="3" height="3" fill="#a0a4ad"/></svg>
<svg class="a" style="left:481px;top:73px;" width="12" height="12" viewBox="0 0 12 12"><path d="M2.5 11 L9.5 1" stroke="#e6e6e6" stroke-width="2.6"/><circle cx="2" cy="9" r="1.6" fill="#e6e6e6"/><circle cx="3.2" cy="10.8" r="1.6" fill="#e6e6e6"/><circle cx="8.8" cy="1.2" r="1.6" fill="#e6e6e6"/><circle cx="10.2" cy="3" r="1.6" fill="#e6e6e6"/></svg>
<svg class="a" style="left:507.5px;top:74px;" width="12" height="10" viewBox="0 0 12 10"><circle cx="4" cy="4.5" r="3" fill="#5a6a95"/><circle cx="7.5" cy="3.5" r="2.3" fill="#5a6a95"/><path d="M2 6 H9 V9 H2Z M9 6.5 L11.5 5 V9.5 L9 8Z" fill="#5a6a95"/></svg>
<div class="t" style="left:534.50px;top:70px;color:#cfd1d6;font-size:9.4px;line-height:20px;transform:scaleX(1.0341);transform-origin:0 0;">View</div>
<div class="a" style="left:567.4px;top:70px;width:71.7px;height:17px;background:#3a4560;border-radius:2px"></div>
<div class="a" style="left:567.4px;top:86px;width:71.7px;height:1.6px;background:#6a9fe9;"></div>
<svg class="a" style="left:572.5px;top:74px;" width="10" height="10" viewBox="0 0 10 10"><rect x="0.7" y="0.7" width="8.6" height="8.6" stroke="#5f9e6c" stroke-width="1.3" fill="none"/><path d="M5 1 V9 M1 5 H9" stroke="#5f9e6c" stroke-width="1.2"/></svg>
<div class="t" style="left:585.00px;top:70px;color:#8a8e98;font-size:9.4px;line-height:20px;transform:scaleX(1.0090);transform-origin:0 0;">Layout</div>
<svg class="a" style="left:624px;top:73px;" width="11" height="12" viewBox="0 0 11 12"><circle cx="5.5" cy="2" r="1.5" stroke="#8a8e98" stroke-width="1.1" fill="none"/><path d="M5.5 3.5 V11 M1 7 Q1.5 11 5.5 11 Q9.5 11 10 7 M3 5.5 H8" stroke="#8a8e98" stroke-width="1.2" fill="none"/></svg>
<div class="a" style="left:172px;top:90px;width:764px;height:492.2px;background:#37425a;"></div>
<div class="a" style="left:173px;top:90px;width:762px;height:491px;background:#1f2330;"></div>
<div class="a" style="left:183px;top:100px;width:752.4px;height:481px;background:#4d4d4d;"></div>
<div class="a" style="left:173px;top:90px;width:762px;height:10px;background:#1f2330;"></div>
<div class="a" style="left:173px;top:100px;width:10px;height:481px;background:#1f2330;"></div>
<div class="a" style="left:173px;top:90px;width:10px;height:10px;background:#8d909a;"></div>
<div class="a" style="left:188.55px;top:93.5px;width:1px;height:6.5px;background:#80848e"></div><div class="a" style="left:195.23px;top:97.2px;width:1px;height:2.8px;background:#80848e"></div><div class="a" style="left:201.91px;top:97.2px;width:1px;height:2.8px;background:#80848e"></div><div class="a" style="left:208.59px;top:97.2px;width:1px;height:2.8px;background:#80848e"></div><div class="a" style="left:215.27px;top:97.2px;width:1px;height:2.8px;background:#80848e"></div><div class="a" style="left:221.75px;top:90px;width:1.4px;height:10px;background:#444956"></div><div class="a" style="left:228.63px;top:97.2px;width:1px;height:2.8px;background:#80848e"></div><div class="a" style="left:235.31px;top:97.2px;width:1px;height:2.8px;background:#80848e"></div><div class="a" style="left:241.99px;top:97.2px;width:1px;height:2.8px;background:#80848e"></div><div class="a" style="left:248.67px;top:97.2px;width:1px;height:2.8px;background:#80848e"></div><div class="a" style="left:255.34px;top:93.5px;width:1px;height:6.5px;background:#80848e"></div><div class="a" style="left:262.02px;top:97.2px;width:1px;height:2.8px;background:#80848e"></div><div class="a" style="left:268.70px;top:97.2px;width:1px;height:2.8px;background:#80848e"></div><div class="a" style="left:275.38px;top:97.2px;width:1px;height:2.8px;background:#80848e"></div><div class="a" style="left:282.06px;top:97.2px;width:1px;height:2.8px;background:#80848e"></div><div class="a" style="left:288.54px;top:90px;width:1.4px;height:10px;background:#444956"></div><div class="a" style="left:295.42px;top:97.2px;width:1px;height:2.8px;background:#80848e"></div><div class="a" style="left:302.10px;top:97.2px;width:1px;height:2.8px;background:#80848e"></div><div class="a" style="left:308.78px;top:97.2px;width:1px;height:2.8px;background:#80848e"></div><div class="a" style="left:315.46px;top:97.2px;width:1px;height:2.8px;background:#80848e"></div><div class="a" style="left:322.13px;top:93.5px;width:1px;height:6.5px;background:#80848e"></div><div class="a" style="left:328.81px;top:97.2px;width:1px;height:2.8px;background:#80848e"></div><div class="a" style="left:335.49px;top:97.2px;width:1px;height:2.8px;background:#80848e"></div><div class="a" style="left:342.17px;top:97.2px;width:1px;height:2.8px;background:#80848e"></div><div class="a" style="left:348.85px;top:97.2px;width:1px;height:2.8px;background:#80848e"></div><div class="a" style="left:355.33px;top:90px;width:1.4px;height:10px;background:#444956"></div><div class="a" style="left:362.21px;top:97.2px;width:1px;height:2.8px;background:#80848e"></div><div class="a" style="left:368.89px;top:97.2px;width:1px;height:2.8px;background:#80848e"></div><div class="a" style="left:375.57px;top:97.2px;width:1px;height:2.8px;background:#80848e"></div><div class="a" style="left:382.25px;top:97.2px;width:1px;height:2.8px;background:#80848e"></div><div class="a" style="left:388.93px;top:93.5px;width:1px;height:6.5px;background:#80848e"></div><div class="a" style="left:395.60px;top:97.2px;width:1px;height:2.8px;background:#80848e"></div><div class="a" style="left:402.28px;top:97.2px;width:1px;height:2.8px;background:#80848e"></div><div class="a" style="left:408.96px;top:97.2px;width:1px;height:2.8px;background:#80848e"></div><div class="a" style="left:415.64px;top:97.2px;width:1px;height:2.8px;background:#80848e"></div><div class="a" style="left:422.12px;top:90px;width:1.4px;height:10px;background:#444956"></div><div class="a" style="left:429.00px;top:97.2px;width:1px;height:2.8px;background:#80848e"></div><div class="a" style="left:435.68px;top:97.2px;width:1px;height:2.8px;background:#80848e"></div><div class="a" style="left:442.36px;top:97.2px;width:1px;height:2.8px;background:#80848e"></div><div class="a" style="left:449.04px;top:97.2px;width:1px;height:2.8px;background:#80848e"></div><div class="a" style="left:455.72px;top:93.5px;width:1px;height:6.5px;background:#80848e"></div><div class="a" style="left:462.39px;top:97.2px;width:1px;height:2.8px;background:#80848e"></div><div class="a" style="left:469.07px;top:97.2px;width:1px;height:2.8px;background:#80848e"></div><div class="a" style="left:475.75px;top:97.2px;width:1px;height:2.8px;background:#80848e"></div><div class="a" style="left:482.43px;top:97.2px;width:1px;height:2.8px;background:#80848e"></div><div class="a" style="left:488.91px;top:90px;width:1.4px;height:10px;background:#444956"></div><div class="a" style="left:495.79px;top:97.2px;width:1px;height:2.8px;background:#80848e"></div><div class="a" style="left:502.47px;top:97.2px;width:1px;height:2.8px;background:#80848e"></div><div class="a" style="left:509.15px;top:97.2px;width:1px;height:2.8px;background:#80848e"></div><div class="a" style="left:515.83px;top:97.2px;width:1px;height:2.8px;background:#80848e"></div><div class="a" style="left:522.50px;top:93.5px;width:1px;height:6.5px;background:#80848e"></div><div class="a" style="left:529.18px;top:97.2px;width:1px;height:2.8px;background:#80848e"></div><div class="a" style="left:535.86px;top:97.2px;width:1px;height:2.8px;background:#80848e"></div><div class="a" style="left:542.54px;top:97.2px;width:1px;height:2.8px;background:#80848e"></div><div class="a" style="left:549.22px;top:97.2px;width:1px;height:2.8px;background:#80848e"></div><div class="a" style="left:555.70px;top:90px;width:1.4px;height:10px;background:#444956"></div><div class="a" style="left:562.58px;top:97.2px;width:1px;height:2.8px;background:#80848e"></div><div class="a" style="left:569.26px;top:97.2px;width:1px;height:2.8px;background:#80848e"></div><div class="a" style="left:575.94px;top:97.2px;width:1px;height:2.8px;background:#80848e"></div><div class="a" style="left:582.62px;top:97.2px;width:1px;height:2.8px;background:#80848e"></div><div class="a" style="left:589.30px;top:93.5px;width:1px;height:6.5px;background:#80848e"></div><div class="a" style="left:595.97px;top:97.2px;width:1px;height:2.8px;background:#80848e"></div><div class="a" style="left:602.65px;top:97.2px;width:1px;height:2.8px;background:#80848e"></div><div class="a" style="left:609.33px;top:97.2px;width:1px;height:2.8px;background:#80848e"></div><div class="a" style="left:616.01px;top:97.2px;width:1px;height:2.8px;background:#80848e"></div><div class="a" style="left:622.49px;top:90px;width:1.4px;height:10px;background:#444956"></div><div class="a" style="left:629.37px;top:97.2px;width:1px;height:2.8px;background:#80848e"></div><div class="a" style="left:636.05px;top:97.2px;width:1px;height:2.8px;background:#80848e"></div><div class="a" style="left:642.73px;top:97.2px;width:1px;height:2.8px;background:#80848e"></div><div class="a" style="left:649.41px;top:97.2px;width:1px;height:2.8px;background:#80848e"></div><div class="a" style="left:656.09px;top:93.5px;width:1px;height:6.5px;background:#80848e"></div><div class="a" style="left:662.76px;top:97.2px;width:1px;height:2.8px;background:#80848e"></div><div class="a" style="left:669.44px;top:97.2px;width:1px;height:2.8px;background:#80848e"></div><div class="a" style="left:676.12px;top:97.2px;width:1px;height:2.8px;background:#80848e"></div><div class="a" style="left:682.80px;top:97.2px;width:1px;height:2.8px;background:#80848e"></div><div class="a" style="left:689.28px;top:90px;width:1.4px;height:10px;background:#444956"></div><div class="a" style="left:696.16px;top:97.2px;width:1px;height:2.8px;background:#80848e"></div><div class="a" style="left:702.84px;top:97.2px;width:1px;height:2.8px;background:#80848e"></div><div class="a" style="left:709.52px;top:97.2px;width:1px;height:2.8px;background:#80848e"></div><div class="a" style="left:716.20px;top:97.2px;width:1px;height:2.8px;background:#80848e"></div><div class="a" style="left:722.88px;top:93.5px;width:1px;height:6.5px;background:#80848e"></div><div class="a" style="left:729.55px;top:97.2px;width:1px;height:2.8px;background:#80848e"></div><div class="a" style="left:736.23px;top:97.2px;width:1px;height:2.8px;background:#80848e"></div><div class="a" style="left:742.91px;top:97.2px;width:1px;height:2.8px;background:#80848e"></div><div class="a" style="left:749.59px;top:97.2px;width:1px;height:2.8px;background:#80848e"></div><div class="a" style="left:756.07px;top:90px;width:1.4px;height:10px;background:#444956"></div><div class="a" style="left:762.95px;top:97.2px;width:1px;height:2.8px;background:#80848e"></div><div class="a" style="left:769.63px;top:97.2px;width:1px;height:2.8px;background:#80848e"></div><div class="a" style="left:776.31px;top:97.2px;width:1px;height:2.8px;background:#80848e"></div><div class="a" style="left:782.99px;top:97.2px;width:1px;height:2.8px;background:#80848e"></div><div class="a" style="left:789.66px;top:93.5px;width:1px;height:6.5px;background:#80848e"></div><div class="a" style="left:796.34px;top:97.2px;width:1px;height:2.8px;background:#80848e"></div><div class="a" style="left:803.02px;top:97.2px;width:1px;height:2.8px;background:#80848e"></div><div class="a" style="left:809.70px;top:97.2px;width:1px;height:2.8px;background:#80848e"></div><div class="a" style="left:816.38px;top:97.2px;width:1px;height:2.8px;background:#80848e"></div><div class="a" style="left:822.86px;top:90px;width:1.4px;height:10px;background:#444956"></div><div class="a" style="left:829.74px;top:97.2px;width:1px;height:2.8px;background:#80848e"></div><div class="a" style="left:836.42px;top:97.2px;width:1px;height:2.8px;background:#80848e"></div><div class="a" style="left:843.10px;top:97.2px;width:1px;height:2.8px;background:#80848e"></div><div class="a" style="left:849.78px;top:97.2px;width:1px;height:2.8px;background:#80848e"></div><div class="a" style="left:856.45px;top:93.5px;width:1px;height:6.5px;background:#80848e"></div><div class="a" style="left:863.13px;top:97.2px;width:1px;height:2.8px;background:#80848e"></div><div class="a" style="left:869.81px;top:97.2px;width:1px;height:2.8px;background:#80848e"></div><div class="a" style="left:876.49px;top:97.2px;width:1px;height:2.8px;background:#80848e"></div><div class="a" style="left:883.17px;top:97.2px;width:1px;height:2.8px;background:#80848e"></div><div class="a" style="left:889.65px;top:90px;width:1.4px;height:10px;background:#444956"></div><div class="a" style="left:896.53px;top:97.2px;width:1px;height:2.8px;background:#80848e"></div><div class="a" style="left:903.21px;top:97.2px;width:1px;height:2.8px;background:#80848e"></div><div class="a" style="left:909.89px;top:97.2px;width:1px;height:2.8px;background:#80848e"></div><div class="a" style="left:916.57px;top:97.2px;width:1px;height:2.8px;background:#80848e"></div><div class="a" style="left:923.25px;top:93.5px;width:1px;height:6.5px;background:#80848e"></div><div class="a" style="left:929.92px;top:97.2px;width:1px;height:2.8px;background:#80848e"></div><div class="a" style="left:180.2px;top:106.75px;width:2.8px;height:1px;background:#80848e"></div><div class="a" style="left:180.2px;top:113.43px;width:2.8px;height:1px;background:#80848e"></div><div class="a" style="left:176.5px;top:120.10px;width:6.5px;height:1px;background:#80848e"></div><div class="a" style="left:180.2px;top:126.78px;width:2.8px;height:1px;background:#80848e"></div><div class="a" style="left:180.2px;top:133.46px;width:2.8px;height:1px;background:#80848e"></div><div class="a" style="left:180.2px;top:140.14px;width:2.8px;height:1px;background:#80848e"></div><div class="a" style="left:180.2px;top:146.82px;width:2.8px;height:1px;background:#80848e"></div><div class="a" style="left:173px;top:153.30px;width:10px;height:1.4px;background:#444956"></div><div class="a" style="left:180.2px;top:160.18px;width:2.8px;height:1px;background:#80848e"></div><div class="a" style="left:180.2px;top:166.86px;width:2.8px;height:1px;background:#80848e"></div><div class="a" style="left:180.2px;top:173.54px;width:2.8px;height:1px;background:#80848e"></div><div class="a" style="left:180.2px;top:180.22px;width:2.8px;height:1px;background:#80848e"></div><div class="a" style="left:176.5px;top:186.90px;width:6.5px;height:1px;background:#80848e"></div><div class="a" style="left:180.2px;top:193.57px;width:2.8px;height:1px;background:#80848e"></div><div class="a" style="left:180.2px;top:200.25px;width:2.8px;height:1px;background:#80848e"></div><div class="a" style="left:180.2px;top:206.93px;width:2.8px;height:1px;background:#80848e"></div><div class="a" style="left:180.2px;top:213.61px;width:2.8px;height:1px;background:#80848e"></div><div class="a" style="left:173px;top:220.09px;width:10px;height:1.4px;background:#444956"></div><div class="a" style="left:180.2px;top:226.97px;width:2.8px;height:1px;background:#80848e"></div><div class="a" style="left:180.2px;top:233.65px;width:2.8px;height:1px;background:#80848e"></div><div class="a" style="left:180.2px;top:240.33px;width:2.8px;height:1px;background:#80848e"></div><div class="a" style="left:180.2px;top:247.01px;width:2.8px;height:1px;background:#80848e"></div><div class="a" style="left:176.5px;top:253.69px;width:6.5px;height:1px;background:#80848e"></div><div class="a" style="left:180.2px;top:260.36px;width:2.8px;height:1px;background:#80848e"></div><div class="a" style="left:180.2px;top:267.04px;width:2.8px;height:1px;background:#80848e"></div><div class="a" style="left:180.2px;top:273.72px;width:2.8px;height:1px;background:#80848e"></div><div class="a" style="left:180.2px;top:280.40px;width:2.8px;height:1px;background:#80848e"></div><div class="a" style="left:173px;top:286.88px;width:10px;height:1.4px;background:#444956"></div><div class="a" style="left:180.2px;top:293.76px;width:2.8px;height:1px;background:#80848e"></div><div class="a" style="left:180.2px;top:300.44px;width:2.8px;height:1px;background:#80848e"></div><div class="a" style="left:180.2px;top:307.12px;width:2.8px;height:1px;background:#80848e"></div><div class="a" style="left:180.2px;top:313.80px;width:2.8px;height:1px;background:#80848e"></div><div class="a" style="left:176.5px;top:320.48px;width:6.5px;height:1px;background:#80848e"></div><div class="a" style="left:180.2px;top:327.15px;width:2.8px;height:1px;background:#80848e"></div><div class="a" style="left:180.2px;top:333.83px;width:2.8px;height:1px;background:#80848e"></div><div class="a" style="left:180.2px;top:340.51px;width:2.8px;height:1px;background:#80848e"></div><div class="a" style="left:180.2px;top:347.19px;width:2.8px;height:1px;background:#80848e"></div><div class="a" style="left:173px;top:353.67px;width:10px;height:1.4px;background:#444956"></div><div class="a" style="left:180.2px;top:360.55px;width:2.8px;height:1px;background:#80848e"></div><div class="a" style="left:180.2px;top:367.23px;width:2.8px;height:1px;background:#80848e"></div><div class="a" style="left:180.2px;top:373.91px;width:2.8px;height:1px;background:#80848e"></div><div class="a" style="left:180.2px;top:380.59px;width:2.8px;height:1px;background:#80848e"></div><div class="a" style="left:176.5px;top:387.26px;width:6.5px;height:1px;background:#80848e"></div><div class="a" style="left:180.2px;top:393.94px;width:2.8px;height:1px;background:#80848e"></div><div class="a" style="left:180.2px;top:400.62px;width:2.8px;height:1px;background:#80848e"></div><div class="a" style="left:180.2px;top:407.30px;width:2.8px;height:1px;background:#80848e"></div><div class="a" style="left:180.2px;top:413.98px;width:2.8px;height:1px;background:#80848e"></div><div class="a" style="left:173px;top:420.46px;width:10px;height:1.4px;background:#444956"></div><div class="a" style="left:180.2px;top:427.34px;width:2.8px;height:1px;background:#80848e"></div><div class="a" style="left:180.2px;top:434.02px;width:2.8px;height:1px;background:#80848e"></div><div class="a" style="left:180.2px;top:440.70px;width:2.8px;height:1px;background:#80848e"></div><div class="a" style="left:180.2px;top:447.38px;width:2.8px;height:1px;background:#80848e"></div><div class="a" style="left:176.5px;top:454.06px;width:6.5px;height:1px;background:#80848e"></div><div class="a" style="left:180.2px;top:460.73px;width:2.8px;height:1px;background:#80848e"></div><div class="a" style="left:180.2px;top:467.41px;width:2.8px;height:1px;background:#80848e"></div><div class="a" style="left:180.2px;top:474.09px;width:2.8px;height:1px;background:#80848e"></div><div class="a" style="left:180.2px;top:480.77px;width:2.8px;height:1px;background:#80848e"></div><div class="a" style="left:173px;top:487.25px;width:10px;height:1.4px;background:#444956"></div><div class="a" style="left:180.2px;top:494.13px;width:2.8px;height:1px;background:#80848e"></div><div class="a" style="left:180.2px;top:500.81px;width:2.8px;height:1px;background:#80848e"></div><div class="a" style="left:180.2px;top:507.49px;width:2.8px;height:1px;background:#80848e"></div><div class="a" style="left:180.2px;top:514.17px;width:2.8px;height:1px;background:#80848e"></div><div class="a" style="left:176.5px;top:520.85px;width:6.5px;height:1px;background:#80848e"></div><div class="a" style="left:180.2px;top:527.52px;width:2.8px;height:1px;background:#80848e"></div><div class="a" style="left:180.2px;top:534.20px;width:2.8px;height:1px;background:#80848e"></div><div class="a" style="left:180.2px;top:540.88px;width:2.8px;height:1px;background:#80848e"></div><div class="a" style="left:180.2px;top:547.56px;width:2.8px;height:1px;background:#80848e"></div><div class="a" style="left:173px;top:554.04px;width:10px;height:1.4px;background:#444956"></div><div class="a" style="left:180.2px;top:560.92px;width:2.8px;height:1px;background:#80848e"></div><div class="a" style="left:180.2px;top:567.60px;width:2.8px;height:1px;background:#80848e"></div><div class="a" style="left:180.2px;top:574.28px;width:2.8px;height:1px;background:#80848e"></div>
<div class="t" style="left:224.65px;top:86px;color:#868a94;font-size:6.6px;line-height:20px;transform:scaleX(0.7235);transform-origin:0 0;">0</div>
<div class="t" style="left:291.44px;top:86px;color:#868a94;font-size:6.6px;line-height:20px;transform:scaleX(0.7939);transform-origin:0 0;">100</div>
<div class="t" style="left:358.23px;top:86px;color:#868a94;font-size:6.6px;line-height:20px;transform:scaleX(0.7939);transform-origin:0 0;">200</div>
<div class="t" style="left:425.02px;top:86px;color:#868a94;font-size:6.6px;line-height:20px;transform:scaleX(0.7939);transform-origin:0 0;">300</div>
<div class="t" style="left:491.81px;top:86px;color:#868a94;font-size:6.6px;line-height:20px;transform:scaleX(0.7939);transform-origin:0 0;">400</div>
<div class="t" style="left:558.60px;top:86px;color:#868a94;font-size:6.6px;line-height:20px;transform:scaleX(0.7939);transform-origin:0 0;">500</div>
<div class="t" style="left:625.39px;top:86px;color:#868a94;font-size:6.6px;line-height:20px;transform:scaleX(0.7939);transform-origin:0 0;">600</div>
<div class="t" style="left:692.18px;top:86px;color:#868a94;font-size:6.6px;line-height:20px;transform:scaleX(0.7939);transform-origin:0 0;">700</div>
<div class="t" style="left:758.97px;top:86px;color:#868a94;font-size:6.6px;line-height:20px;transform:scaleX(0.7939);transform-origin:0 0;">800</div>
<div class="t" style="left:825.76px;top:86px;color:#868a94;font-size:6.6px;line-height:20px;transform:scaleX(0.7939);transform-origin:0 0;">900</div>
<div class="t" style="left:892.55px;top:86px;color:#868a94;font-size:6.6px;line-height:20px;transform:scaleX(0.8035);transform-origin:0 0;">1000</div>
<div class="t" style="left:169.20px;top:152.20px;color:#868a94;font-size:6.6px;line-height:20px;transform:rotate(-90deg) scaleX(0.723);transform-origin:0 0">0</div>
<div class="t" style="left:169.20px;top:218.99px;color:#868a94;font-size:6.6px;line-height:20px;transform:rotate(-90deg) scaleX(0.794);transform-origin:0 0">100</div>
<div class="t" style="left:169.20px;top:285.78px;color:#868a94;font-size:6.6px;line-height:20px;transform:rotate(-90deg) scaleX(0.794);transform-origin:0 0">200</div>
<div class="t" style="left:169.20px;top:352.57px;color:#868a94;font-size:6.6px;line-height:20px;transform:rotate(-90deg) scaleX(0.794);transform-origin:0 0">300</div>
<div class="t" style="left:169.20px;top:419.36px;color:#868a94;font-size:6.6px;line-height:20px;transform:rotate(-90deg) scaleX(0.794);transform-origin:0 0">400</div>
<div class="t" style="left:169.20px;top:486.15px;color:#868a94;font-size:6.6px;line-height:20px;transform:rotate(-90deg) scaleX(0.794);transform-origin:0 0">500</div>
<div class="t" style="left:169.20px;top:552.94px;color:#868a94;font-size:6.6px;line-height:20px;transform:rotate(-90deg) scaleX(0.794);transform-origin:0 0">600</div>
<div class="a" style="left:183px;top:153.5px;width:39.44999999999999px;height:1.2px;background:#a84a4e;"></div>
<div class="a" style="left:222.45px;top:153.5px;width:683.95px;height:1.2px;background:#87547c;"></div>
<div class="a" style="left:906.4px;top:153.5px;width:29.0px;height:1.2px;background:#8f4d55;"></div>
<div class="a" style="left:221.85px;top:100px;width:1.3px;height:54px;background:#8cc43a;"></div>
<div class="a" style="left:221.85px;top:154.5px;width:1.3px;height:426.5px;background:#7c9e5c;"></div>
<div class="a" style="left:906.0px;top:154px;width:1.1px;height:401px;background:#57568f;"></div>
<div class="a" style="left:223.14999999999998px;top:554.0px;width:683.25px;height:1.1px;background:#57568f;"></div>
<div class="a" style="left:185.8px;top:576px;width:738.4px;height:2.6px;background:#5c5c5c;border-radius:1.3px"></div>
<div class="a" style="left:420.7px;top:575.1px;width:258px;height:3.9px;background:#8e8e8e;border-radius:2px"></div>
<div class="a" style="left:929.8px;top:102.6px;width:2.1px;height:467.2px;background:#5c5c5c;border-radius:1px"></div>
<div class="a" style="left:928.8px;top:242.4px;width:4.2px;height:170.1px;background:#8e8e8e;border-radius:2px"></div>
<div class="a" style="left:183px;top:581px;width:752.4px;height:1.2px;background:#37425a;"></div>
<svg class="a" style="left:190.5px;top:107px;" width="11" height="11" viewBox="0 0 11 11"><circle cx="5.5" cy="5.5" r="4.8" fill="#e6e6e6"/><rect x="2.8" y="4.8" width="5.4" height="1.5" fill="#4d4d4d"/></svg>
<div class="t" style="left:211.60px;top:103px;color:#f0f0f0;font-size:8.9px;line-height:20px;transform:scaleX(1.0186);transform-origin:0 0;text-shadow:0 0 1.5px #000,0 0 1px #000">100 %</div>
<svg class="a" style="left:248.5px;top:107px;" width="11" height="11" viewBox="0 0 11 11"><circle cx="5.5" cy="5.5" r="4.8" fill="#e6e6e6"/><rect x="2.8" y="4.8" width="5.4" height="1.5" fill="#4d4d4d"/><rect x="4.8" y="2.8" width="1.5" height="5.4" fill="#4d4d4d"/></svg>
<div class="a" style="left:431px;top:287px;width:268px;height:134px;background:#a7abc7;"></div>
<div class="a" style="left:431px;top:287.1px;width:44.7px;height:12.9px;background:#3a3944;border-radius:0 0 2px 2px;box-shadow:0 1px 1px rgba(0,0,0,0.25)"></div>
<div class="t" style="left:435.80px;top:283px;color:#dcdce0;font-size:8.6px;line-height:20px;transform:scaleX(1.0957);transform-origin:0 0;">Button 1</div>
<div class="t" style="left:479.60px;top:283px;color:#15161a;font-size:8.6px;line-height:20px;transform:scaleX(1.1163);transform-origin:0 0;">This is a test of the emergency broadcast system.</div>
<div class="a" style="left:430.3px;top:302.4px;width:268.6px;height:68.4px;box-sizing:border-box;border:2px solid #ea9c6c;border-radius:1.5px"></div>
<div class="t" style="left:432.50px;top:298px;color:#f2f2f4;font-size:8.6px;line-height:20px;transform:scaleX(1.1128);transform-origin:0 0;">I don't belong here</div>
<svg class="a" style="left:425.45px;top:297.4px;" width="12" height="12" viewBox="0 0 12 12"><path d="M6 0.6 V11.4 M0.6 6 H11.4" stroke="#f4f0f0" stroke-width="2.6"/><path d="M6 1.2 V4.6 M6 7.4 V10.8 M1.2 6 H4.6 M7.4 6 H10.8" stroke="#ff6a78" stroke-width="1.3"/></svg>
<div class="t" style="left:431.40px;top:369px;color:#15161a;font-size:8.6px;line-height:20px;transform:scaleX(1.1200);transform-origin:0 0;">This is a test of the emergency broadcast system.</div>
<div class="a" style="left:646.4px;top:372.6px;width:44.5px;height:13px;background:#3a3944;border-radius:2px;box-shadow:0 1px 1px rgba(0,0,0,0.25)"></div>
<div class="t" style="left:650.20px;top:369px;color:#dcdce0;font-size:8.6px;line-height:20px;transform:scaleX(1.1113);transform-origin:0 0;">Button 1</div>
<div class="a" style="left:172px;top:589px;width:764px;height:22px;background:#323a4d;"></div>
<svg class="a" style="left:177.9px;top:596.5px;" width="7" height="7" viewBox="0 0 7 7"><circle cx="3.5" cy="3.5" r="2.9" fill="#ff5a5a"/></svg>
<div class="t" style="left:187.00px;top:590px;color:#cfd1d6;font-size:9.4px;line-height:20px;transform:scaleX(1.1135);transform-origin:0 0;">Output</div>
<div class="t" style="left:229.50px;top:590px;color:#cfd1d6;font-size:9.4px;line-height:20px;transform:scaleX(1.0905);transform-origin:0 0;">Debugger</div>
<div class="t" style="left:285.50px;top:590px;color:#cfd1d6;font-size:9.4px;line-height:20px;transform:scaleX(1.0597);transform-origin:0 0;">Audio</div>
<div class="t" style="left:322.00px;top:590px;color:#cfd1d6;font-size:9.4px;line-height:20px;transform:scaleX(1.0890);transform-origin:0 0;">Animation</div>
<div class="t" style="left:879.00px;top:590px;color:#8d919b;font-size:9.4px;line-height:20px;transform:scaleX(1.0391);transform-origin:0 0;">3.5.1.stable</div>
<div class="a" style="left:942.3px;top:49.7px;width:55px;height:17.6px;background:#323a4d;"></div>
<div class="t" style="left:948.30px;top:49px;color:#cfd1d6;font-size:9.4px;line-height:20px;transform:scaleX(1.1013);transform-origin:0 0;">Inspector</div>
<div class="a" style="left:997.3px;top:49.7px;width:37.3px;height:17.6px;background:#262c3b;"></div>
<div class="t" style="left:1004.70px;top:49px;color:#777b85;font-size:9.4px;line-height:20px;transform:scaleX(1.0371);transform-origin:0 0;">Node</div>
<svg class="a" style="left:1127px;top:53px;" width="3" height="11" viewBox="0 0 3 11"><circle cx="1.5" cy="1.5" r="1.1" fill="#a0a4ad"/><circle cx="1.5" cy="5.5" r="1.1" fill="#a0a4ad"/><circle cx="1.5" cy="9.5" r="1.1" fill="#a0a4ad"/></svg>
<div class="a" style="left:942px;top:67.3px;width:191px;height:543.2px;background:#323a4d;box-sizing:border-box;border:1px solid #374259;border-top:none"></div>
<svg class="a" style="left:949.5px;top:74.5px;" width="10" height="11" viewBox="0 0 10 11"><path d="M0.5 0.5 H5.5 L8 3 V6 H6 V10.5 H0.5Z" fill="#e6e6e6"/><path d="M5.5 0.5 V3 H8" fill="#9aa" /><path d="M7.5 6.5 V10.5 M5.5 8.5 H9.5" stroke="#5fe07a" stroke-width="1.6"/></svg>
<svg class="a" style="left:970px;top:75px;" width="11" height="10" viewBox="0 0 11 10"><path d="M0.5 2 V9.5 H10 L10.5 4.5 H4 L3.5 2 Z" fill="#e6e6e6"/><path d="M1.5 1 H4 L5 2.5" stroke="#e6e6e6" stroke-width="1" fill="none"/></svg>
<svg class="a" style="left:991.5px;top:75px;" width="10" height="10" viewBox="0 0 10 10"><path d="M0.5 0.5 H8 L9.5 2 V9.5 H0.5Z" fill="#767b86"/><rect x="2.5" y="1" width="4" height="2.5" fill="#2f3749"/><rect x="2.5" y="6" width="5" height="3.5" fill="#2f3749"/></svg>
<svg class="a" style="left:1016.5px;top:74px;" width="3" height="12" viewBox="0 0 3 12"><circle cx="1.5" cy="1.8" r="1.3" fill="#e6e6e6"/><circle cx="1.5" cy="6" r="1.3" fill="#e6e6e6"/><circle cx="1.5" cy="10.2" r="1.3" fill="#e6e6e6"/></svg>
<svg class="a" style="left:1083px;top:75px;" width="6" height="10" viewBox="0 0 6 10"><path d="M4.5 1 L1.5 5 L4.5 9" stroke="#e6e6e6" stroke-width="1.4" fill="none"/></svg>
<svg class="a" style="left:1099.5px;top:75px;" width="6" height="10" viewBox="0 0 6 10"><path d="M1.5 1 L4.5 5 L1.5 9" stroke="#7d818b" stroke-width="1.3" fill="none"/></svg>
<svg class="a" style="left:1115.5px;top:74px;" width="12" height="11" viewBox="0 0 12 11"><path d="M6.6 9.6 A4 4 0 1 0 2.6 4.6" stroke="#e6e6e6" stroke-width="1.4" fill="none"/><path d="M0.2 6 L3.9 3.6 L3.8 7.8Z" fill="#e6e6e6"/><path d="M6.4 3.3 V5.8 L8.6 6.8" stroke="#e6e6e6" stroke-width="1.2" fill="none"/></svg>
<div class="a" style="left:945.2px;top:91.5px;width:163.7px;height:16.1px;background:#232939;"></div>
<svg class="a" style="left:948px;top:94.6px;" width="10" height="10" viewBox="0 0 10 10"><circle cx="5" cy="5" r="3.3" stroke="#8fe196" stroke-width="1.3" fill="none"/></svg>
<div class="t" style="left:966.60px;top:90px;color:#cfd1d6;font-size:9.4px;line-height:20px;transform:scaleX(1.0457);transform-origin:0 0;">Control</div>
<svg class="a" style="left:1096.6px;top:97px;" width="8" height="6" viewBox="0 0 8 6"><path d="M1.4 1.6 L4 4.2 L6.6 1.6" stroke="#c8cad0" stroke-width="1.15" fill="none"/></svg>
<svg class="a" style="left:1115.5px;top:92.5px;" width="12" height="13" viewBox="0 0 12 13"><circle cx="7" cy="3.6" r="2.2" stroke="#e6e6e6" stroke-width="1.3" fill="none"/><path d="M5.4 5.3 L3.9 6.8" stroke="#e6e6e6" stroke-width="1.3"/><path d="M0.9 8.2 H2.1 Q3.5 8.2 3.5 9.9 Q3.5 11.6 2.1 11.6 H0.9Z M6 8.2 Q4.7 8.2 4.7 9.9 Q4.7 11.6 6 11.6 Q7.3 11.6 7.3 9.9 Q7.3 8.2 6 8.2Z M11.2 8.5 Q10.7 8.2 10.1 8.2 Q8.6 8.2 8.6 9.9 Q8.6 11.6 10.1 11.6 Q10.7 11.6 11.2 11.3" stroke="#e6e6e6" stroke-width="1.1" fill="none"/></svg>
<div class="a" style="left:945.2px;top:110.9px;width:163.7px;height:16.9px;background:#232939;"></div>
<div class="t" style="left:949.30px;top:110px;color:#6f737d;font-size:9.4px;line-height:20px;transform:scaleX(1.0922);transform-origin:0 0;">Filter properties</div>
<svg class="a" style="left:1094px;top:114px;" width="11" height="11" viewBox="0 0 11 11"><circle cx="4.6" cy="4.6" r="2.9" stroke="#e0e0e0" stroke-width="1.3" fill="none"/><path d="M6.8 6.8 L9.8 9.8" stroke="#e0e0e0" stroke-width="1.5"/></svg>
<svg class="a" style="left:1116px;top:113.5px;" width="11" height="12" viewBox="0 0 11 12"><path d="M2.8 1 V5" stroke="#e6e6e6" stroke-width="1.2"/><rect x="1.2" y="5.6" width="3.2" height="5.2" rx="1.5" fill="#e6e6e6"/><path d="M8.3 5 V11" stroke="#e6e6e6" stroke-width="1.5"/><path d="M6.4 1 V3 Q8.3 5.6 10.2 3 V1" stroke="#e6e6e6" stroke-width="1.3" fill="none"/></svg>
<div class="a" style="left:945px;top:131.3px;width:185.2px;height:475px;background:#252b3b;box-sizing:border-box;border:1px solid #212533"></div>
<div class="a" style="left:1124.8px;top:133.3px;width:3.8px;height:471px;background:#333946;border-radius:2px"></div>
<div class="a" style="left:1124.8px;top:133.3px;width:3.8px;height:358.1px;background:#6f7480;border-radius:2px"></div>
<div class="a" style="left:947.8px;top:147.8px;width:172.2px;height:58.9px;background:#293042;"></div>
<div class="a" style="left:947.8px;top:445.3px;width:172.2px;height:87.7px;background:#293042;"></div>
<div class="a" style="left:947.8px;top:548px;width:172.2px;height:29.4px;background:#293042;"></div>
<div class="a" style="left:947.8px;top:133.6px;width:172.2px;height:14.200000000000017px;background:#3d4250;"></div>
<svg class="a" style="left:1010.6999999999999px;top:135.7px;" width="10" height="10" viewBox="0 0 10 10"><circle cx="5" cy="5" r="3.2" stroke="#8fe196" stroke-width="1.4" fill="none"/></svg>
<div class="t" style="left:1023.90px;top:131px;color:#cfd1d6;font-size:9.4px;line-height:20px;transform:scaleX(1.0556);transform-origin:0 0;">Control</div>
<svg class="a" style="left:950.2px;top:151.7px;" width="6" height="8" viewBox="0 0 6 8"><path d="M1.6 1.5 L4.2 4 L1.6 6.5" stroke="#a0a4ad" stroke-width="1.2" fill="none"/></svg>
<div class="t" style="left:960.50px;top:146px;color:#cfd1d6;font-size:9.4px;line-height:20px;transform:scaleX(1.0437);transform-origin:0 0;">Anchor</div>
<svg class="a" style="left:950.2px;top:166.2px;" width="6" height="8" viewBox="0 0 6 8"><path d="M1.6 1.5 L4.2 4 L1.6 6.5" stroke="#a0a4ad" stroke-width="1.2" fill="none"/></svg>
<div class="t" style="left:960.50px;top:160px;color:#cfd1d6;font-size:9.4px;line-height:20px;transform:scaleX(1.1143);transform-origin:0 0;">Margin</div>
<svg class="a" style="left:950.2px;top:181px;" width="6" height="8" viewBox="0 0 6 8"><path d="M1.6 1.5 L4.2 4 L1.6 6.5" stroke="#a0a4ad" stroke-width="1.2" fill="none"/></svg>
<div class="t" style="left:960.50px;top:175px;color:#cfd1d6;font-size:9.4px;line-height:20px;transform:scaleX(1.0582);transform-origin:0 0;">Grow Direction</div>
<svg class="a" style="left:949.2px;top:197.0px;" width="8" height="6" viewBox="0 0 8 6"><path d="M1.4 1.6 L4 4.2 L6.6 1.6" stroke="#a0a4ad" stroke-width="1.15" fill="none"/></svg>
<div class="t" style="left:960.50px;top:190px;color:#cfd1d6;font-size:9.4px;line-height:20px;transform:scaleX(0.9836);transform-origin:0 0;">Rect</div>
<div class="t" style="left:953.70px;top:206px;color:#a9adb5;font-size:9.4px;line-height:20px;transform:scaleX(1.0339);transform-origin:0 0;">Position</div>
<svg class="a" style="left:1024.0px;top:210.5px;" width="10" height="10" viewBox="0 0 10 10"><path d="M5.9 8.6 A3.4 3.4 0 1 0 2.5 4.2" stroke="#e6e6e6" stroke-width="1.5" fill="none"/><path d="M0.3 5.6 L3.6 3.2 L3.4 7.3Z" fill="#e6e6e6"/></svg>
<div class="a" style="left:1036.9px;top:207.1px;width:83.1px;height:37.0px;background:#1f2330;"></div>
<div class="a" style="left:1036.9px;top:207.1px;width:12.1px;height:17.200000000000017px;background:#1b1e28;"></div>
<div class="a" style="left:1036.9px;top:227.1px;width:12.1px;height:17.0px;background:#1b1e28;"></div>
<div class="t" style="left:1040.90px;top:208px;color:#a9745c;font-size:9.6px;line-height:20px;transform:scaleX(0.8958);transform-origin:0 0;">x</div>
<div class="t" style="left:1040.60px;top:228px;color:#5f9a63;font-size:9.6px;line-height:20px;transform:scaleX(1.0000);transform-origin:0 0;">y</div>
<div class="t" style="left:1051.90px;top:207px;color:#d8dadf;font-size:10px;line-height:20px;transform:scaleX(0.9369);transform-origin:0 0;">0</div>
<div class="t" style="left:1051.90px;top:227px;color:#d8dadf;font-size:10px;line-height:20px;transform:scaleX(0.9459);transform-origin:0 0;">24</div>
<div class="t" style="left:953.70px;top:246px;color:#a9adb5;font-size:9.4px;line-height:20px;transform:scaleX(0.9189);transform-origin:0 0;">Size</div>
<svg class="a" style="left:1024.0px;top:250.5px;" width="10" height="10" viewBox="0 0 10 10"><path d="M5.9 8.6 A3.4 3.4 0 1 0 2.5 4.2" stroke="#e6e6e6" stroke-width="1.5" fill="none"/><path d="M0.3 5.6 L3.6 3.2 L3.4 7.3Z" fill="#e6e6e6"/></svg>
<div class="a" style="left:1036.9px;top:247.3px;width:83.1px;height:36.89999999999998px;background:#1f2330;"></div>
<div class="a" style="left:1036.9px;top:247.3px;width:12.1px;height:16.69999999999999px;background:#1b1e28;"></div>
<div class="a" style="left:1036.9px;top:267px;width:12.1px;height:17.19999999999999px;background:#1b1e28;"></div>
<div class="t" style="left:1040.90px;top:248px;color:#a9745c;font-size:9.6px;line-height:20px;transform:scaleX(0.8958);transform-origin:0 0;">x</div>
<div class="t" style="left:1040.60px;top:268px;color:#5f9a63;font-size:9.6px;line-height:20px;transform:scaleX(1.0000);transform-origin:0 0;">y</div>
<div class="t" style="left:1051.90px;top:247px;color:#d8dadf;font-size:10px;line-height:20px;transform:scaleX(0.9401);transform-origin:0 0;">400</div>
<div class="t" style="left:1052.60px;top:267px;color:#d8dadf;font-size:10px;line-height:20px;transform:scaleX(0.8982);transform-origin:0 0;">100</div>
<div class="a" style="left:953.2px;top:287.7px;width:83.1px;height:17.1px;background:#585c67;"></div>
<div class="t" style="left:954.50px;top:286px;color:#a9adb5;font-size:9.4px;line-height:20px;transform:scaleX(1.0819);transform-origin:0 0;">Min Size</div>
<svg class="a" style="left:1024.0px;top:291px;" width="10" height="10" viewBox="0 0 10 10"><path d="M5.9 8.6 A3.4 3.4 0 1 0 2.5 4.2" stroke="#e6e6e6" stroke-width="1.5" fill="none"/><path d="M0.3 5.6 L3.6 3.2 L3.4 7.3Z" fill="#e6e6e6"/></svg>
<div class="a" style="left:1036.9px;top:287.2px;width:83.1px;height:17.100000000000023px;background:#1f2330;"></div>
<div class="a" style="left:1036.9px;top:287.2px;width:12.1px;height:17.100000000000023px;background:#1b1e28;"></div>
<div class="a" style="left:1036.6px;top:307.3px;width:83.5px;height:17.599999999999966px;box-sizing:border-box;border:1px solid #5585cc;background:#232838"></div>
<div class="t" style="left:1040.90px;top:288px;color:#a9745c;font-size:9.6px;line-height:20px;transform:scaleX(0.8958);transform-origin:0 0;">x</div>
<div class="t" style="left:1040.60px;top:308px;color:#5f9a63;font-size:9.6px;line-height:20px;transform:scaleX(1.0000);transform-origin:0 0;">y</div>
<div class="t" style="left:1051.90px;top:287px;color:#d8dadf;font-size:10px;line-height:20px;transform:scaleX(0.9369);transform-origin:0 0;">0</div>
<div class="t" style="left:1052.60px;top:308px;color:#d8dadf;font-size:10px;line-height:20px;transform:scaleX(0.9162);transform-origin:0 0;">100</div>
<div class="t" style="left:953.70px;top:326px;color:#a9adb5;font-size:9.4px;line-height:20px;transform:scaleX(1.0367);transform-origin:0 0;">Rotation</div>
<div class="a" style="left:1036.9px;top:326.7px;width:83.1px;height:17.6px;background:#1f2330;"></div>
<div class="t" style="left:1047.00px;top:328px;color:#d8dadf;font-size:10px;line-height:20px;transform:scaleX(0.9730);transform-origin:0 0;">0</div>
<div class="a" style="left:1040.1px;top:342.2px;width:73.1px;height:1.1px;background:#4a4f5a;"></div>
<div class="a" style="left:1040.1px;top:342.2px;width:38px;height:1.1px;background:#c8cad0;"></div>
<svg class="a" style="left:1076px;top:340.5px;" width="4" height="4" viewBox="0 0 4 4"><circle cx="2" cy="2" r="1.7" fill="#e6e6e6"/></svg>
<div class="t" style="left:953.70px;top:346px;color:#a9adb5;font-size:9.4px;line-height:20px;transform:scaleX(0.9915);transform-origin:0 0;">Scale</div>
<div class="a" style="left:1036.9px;top:347.4px;width:83.1px;height:37.10000000000002px;background:#1f2330;"></div>
<div class="a" style="left:1036.9px;top:347.4px;width:12.1px;height:17.30000000000001px;background:#1b1e28;"></div>
<div class="a" style="left:1036.9px;top:367.5px;width:12.1px;height:17.0px;background:#1b1e28;"></div>
<div class="t" style="left:1040.90px;top:348px;color:#a9745c;font-size:9.6px;line-height:20px;transform:scaleX(0.8958);transform-origin:0 0;">x</div>
<div class="t" style="left:1040.60px;top:368px;color:#5f9a63;font-size:9.6px;line-height:20px;transform:scaleX(1.0000);transform-origin:0 0;">y</div>
<div class="t" style="left:1051.90px;top:347px;color:#d8dadf;font-size:10px;line-height:20px;transform:scaleX(0.8288);transform-origin:0 0;">1</div>
<div class="t" style="left:1051.90px;top:367px;color:#d8dadf;font-size:10px;line-height:20px;transform:scaleX(0.8288);transform-origin:0 0;">1</div>
<div class="t" style="left:953.70px;top:386px;color:#a9adb5;font-size:9.4px;line-height:20px;transform:scaleX(1.1320);transform-origin:0 0;">Pivot Offset</div>
<div class="a" style="left:1036.9px;top:387.3px;width:83.1px;height:37.30000000000001px;background:#1f2330;"></div>
<div class="a" style="left:1036.9px;top:387.3px;width:12.1px;height:17.30000000000001px;background:#1b1e28;"></div>
<div class="a" style="left:1036.9px;top:407px;width:12.1px;height:17.600000000000023px;background:#1b1e28;"></div>
<div class="t" style="left:1040.90px;top:388px;color:#a9745c;font-size:9.6px;line-height:20px;transform:scaleX(0.8958);transform-origin:0 0;">x</div>
<div class="t" style="left:1040.60px;top:408px;color:#5f9a63;font-size:9.6px;line-height:20px;transform:scaleX(1.0000);transform-origin:0 0;">y</div>
<div class="t" style="left:1051.90px;top:387px;color:#d8dadf;font-size:10px;line-height:20px;transform:scaleX(0.9369);transform-origin:0 0;">0</div>
<div class="t" style="left:1051.90px;top:407px;color:#d8dadf;font-size:10px;line-height:20px;transform:scaleX(0.9369);transform-origin:0 0;">0</div>
<div class="t" style="left:953.70px;top:427px;color:#a9adb5;font-size:9.4px;line-height:20px;transform:scaleX(0.9817);transform-origin:0 0;">Clip Content</div>
<div class="a" style="left:1036.9px;top:428px;width:83.1px;height:17.2px;background:#1f2330;"></div>
<div class="a" style="left:1039.8px;top:432px;width:9.2px;height:9.2px;background:#5a5e69;border-radius:1.5px"></div>
<div class="t" style="left:1052.80px;top:427px;color:#d8dadf;font-size:9.4px;line-height:20px;transform:scaleX(1.0519);transform-origin:0 0;">On</div>
<svg class="a" style="left:950.2px;top:448.1px;" width="6" height="8" viewBox="0 0 6 8"><path d="M1.6 1.5 L4.2 4 L1.6 6.5" stroke="#a0a4ad" stroke-width="1.2" fill="none"/></svg>
<div class="t" style="left:960.50px;top:442px;color:#cfd1d6;font-size:9.4px;line-height:20px;transform:scaleX(0.9861);transform-origin:0 0;">Hint</div>
<svg class="a" style="left:950.2px;top:462.8px;" width="6" height="8" viewBox="0 0 6 8"><path d="M1.6 1.5 L4.2 4 L1.6 6.5" stroke="#a0a4ad" stroke-width="1.2" fill="none"/></svg>
<div class="t" style="left:960.50px;top:457px;color:#cfd1d6;font-size:9.4px;line-height:20px;transform:scaleX(0.9760);transform-origin:0 0;">Focus</div>
<svg class="a" style="left:950.2px;top:477.5px;" width="6" height="8" viewBox="0 0 6 8"><path d="M1.6 1.5 L4.2 4 L1.6 6.5" stroke="#a0a4ad" stroke-width="1.2" fill="none"/></svg>
<div class="t" style="left:960.50px;top:472px;color:#cfd1d6;font-size:9.4px;line-height:20px;transform:scaleX(1.0461);transform-origin:0 0;">Mouse</div>
<svg class="a" style="left:950.2px;top:492.3px;" width="6" height="8" viewBox="0 0 6 8"><path d="M1.6 1.5 L4.2 4 L1.6 6.5" stroke="#a0a4ad" stroke-width="1.2" fill="none"/></svg>
<div class="t" style="left:960.50px;top:487px;color:#cfd1d6;font-size:9.4px;line-height:20px;transform:scaleX(1.1714);transform-origin:0 0;">Input</div>
<svg class="a" style="left:950.2px;top:507px;" width="6" height="8" viewBox="0 0 6 8"><path d="M1.6 1.5 L4.2 4 L1.6 6.5" stroke="#a0a4ad" stroke-width="1.2" fill="none"/></svg>
<div class="t" style="left:960.50px;top:501px;color:#cfd1d6;font-size:9.4px;line-height:20px;transform:scaleX(0.9909);transform-origin:0 0;">Size Flags</div>
<svg class="a" style="left:950.2px;top:521.6px;" width="6" height="8" viewBox="0 0 6 8"><path d="M1.6 1.5 L4.2 4 L1.6 6.5" stroke="#a0a4ad" stroke-width="1.2" fill="none"/></svg>
<div class="t" style="left:960.50px;top:516px;color:#cfd1d6;font-size:9.4px;line-height:20px;transform:scaleX(1.0262);transform-origin:0 0;">Theme</div>
<div class="a" style="left:947.8px;top:533px;width:172.2px;height:15px;background:#3d4250;"></div>
<svg class="a" style="left:1001.5px;top:535.5px;" width="10" height="10" viewBox="0 0 10 10"><path d="M9.5 0.5 L4.5 6" stroke="#e6e6e6" stroke-width="1.6"/><path d="M4 5.5 Q1.5 5.8 1.5 8 L0.5 9.5 Q4 9.8 5 7.2Z" fill="#e6e6e6"/></svg>
<div class="t" style="left:1013.50px;top:531px;color:#cfd1d6;font-size:9.4px;line-height:20px;transform:scaleX(1.0529);transform-origin:0 0;">CanvasItem</div>
<svg class="a" style="left:950.2px;top:551px;" width="6" height="8" viewBox="0 0 6 8"><path d="M1.6 1.5 L4.2 4 L1.6 6.5" stroke="#a0a4ad" stroke-width="1.2" fill="none"/></svg>
<div class="t" style="left:960.50px;top:545px;color:#cfd1d6;font-size:9.4px;line-height:20px;transform:scaleX(1.0949);transform-origin:0 0;">Visibility</div>
<svg class="a" style="left:950.2px;top:565.8px;" width="6" height="8" viewBox="0 0 6 8"><path d="M1.6 1.5 L4.2 4 L1.6 6.5" stroke="#a0a4ad" stroke-width="1.2" fill="none"/></svg>
<div class="t" style="left:960.50px;top:560px;color:#cfd1d6;font-size:9.4px;line-height:20px;transform:scaleX(1.0923);transform-origin:0 0;">Material</div>
<div class="a" style="left:947.8px;top:577.4px;width:172.2px;height:14.399999999999977px;background:#3d4250;"></div>
<svg class="a" style="left:1015.3px;top:579.5999999999999px;" width="10" height="10" viewBox="0 0 10 10"><circle cx="5" cy="5" r="3.2" stroke="#e6e6e6" stroke-width="1.4" fill="none"/></svg>
<div class="t" style="left:1028.50px;top:575px;color:#cfd1d6;font-size:9.4px;line-height:20px;transform:scaleX(1.0683);transform-origin:0 0;">Node</div>
<div class="t" style="left:948.60px;top:590px;color:#a9adb5;font-size:9.4px;line-height:20px;transform:scaleX(1.0773);transform-origin:0 0;">Editor Description</div>
</body></html>
